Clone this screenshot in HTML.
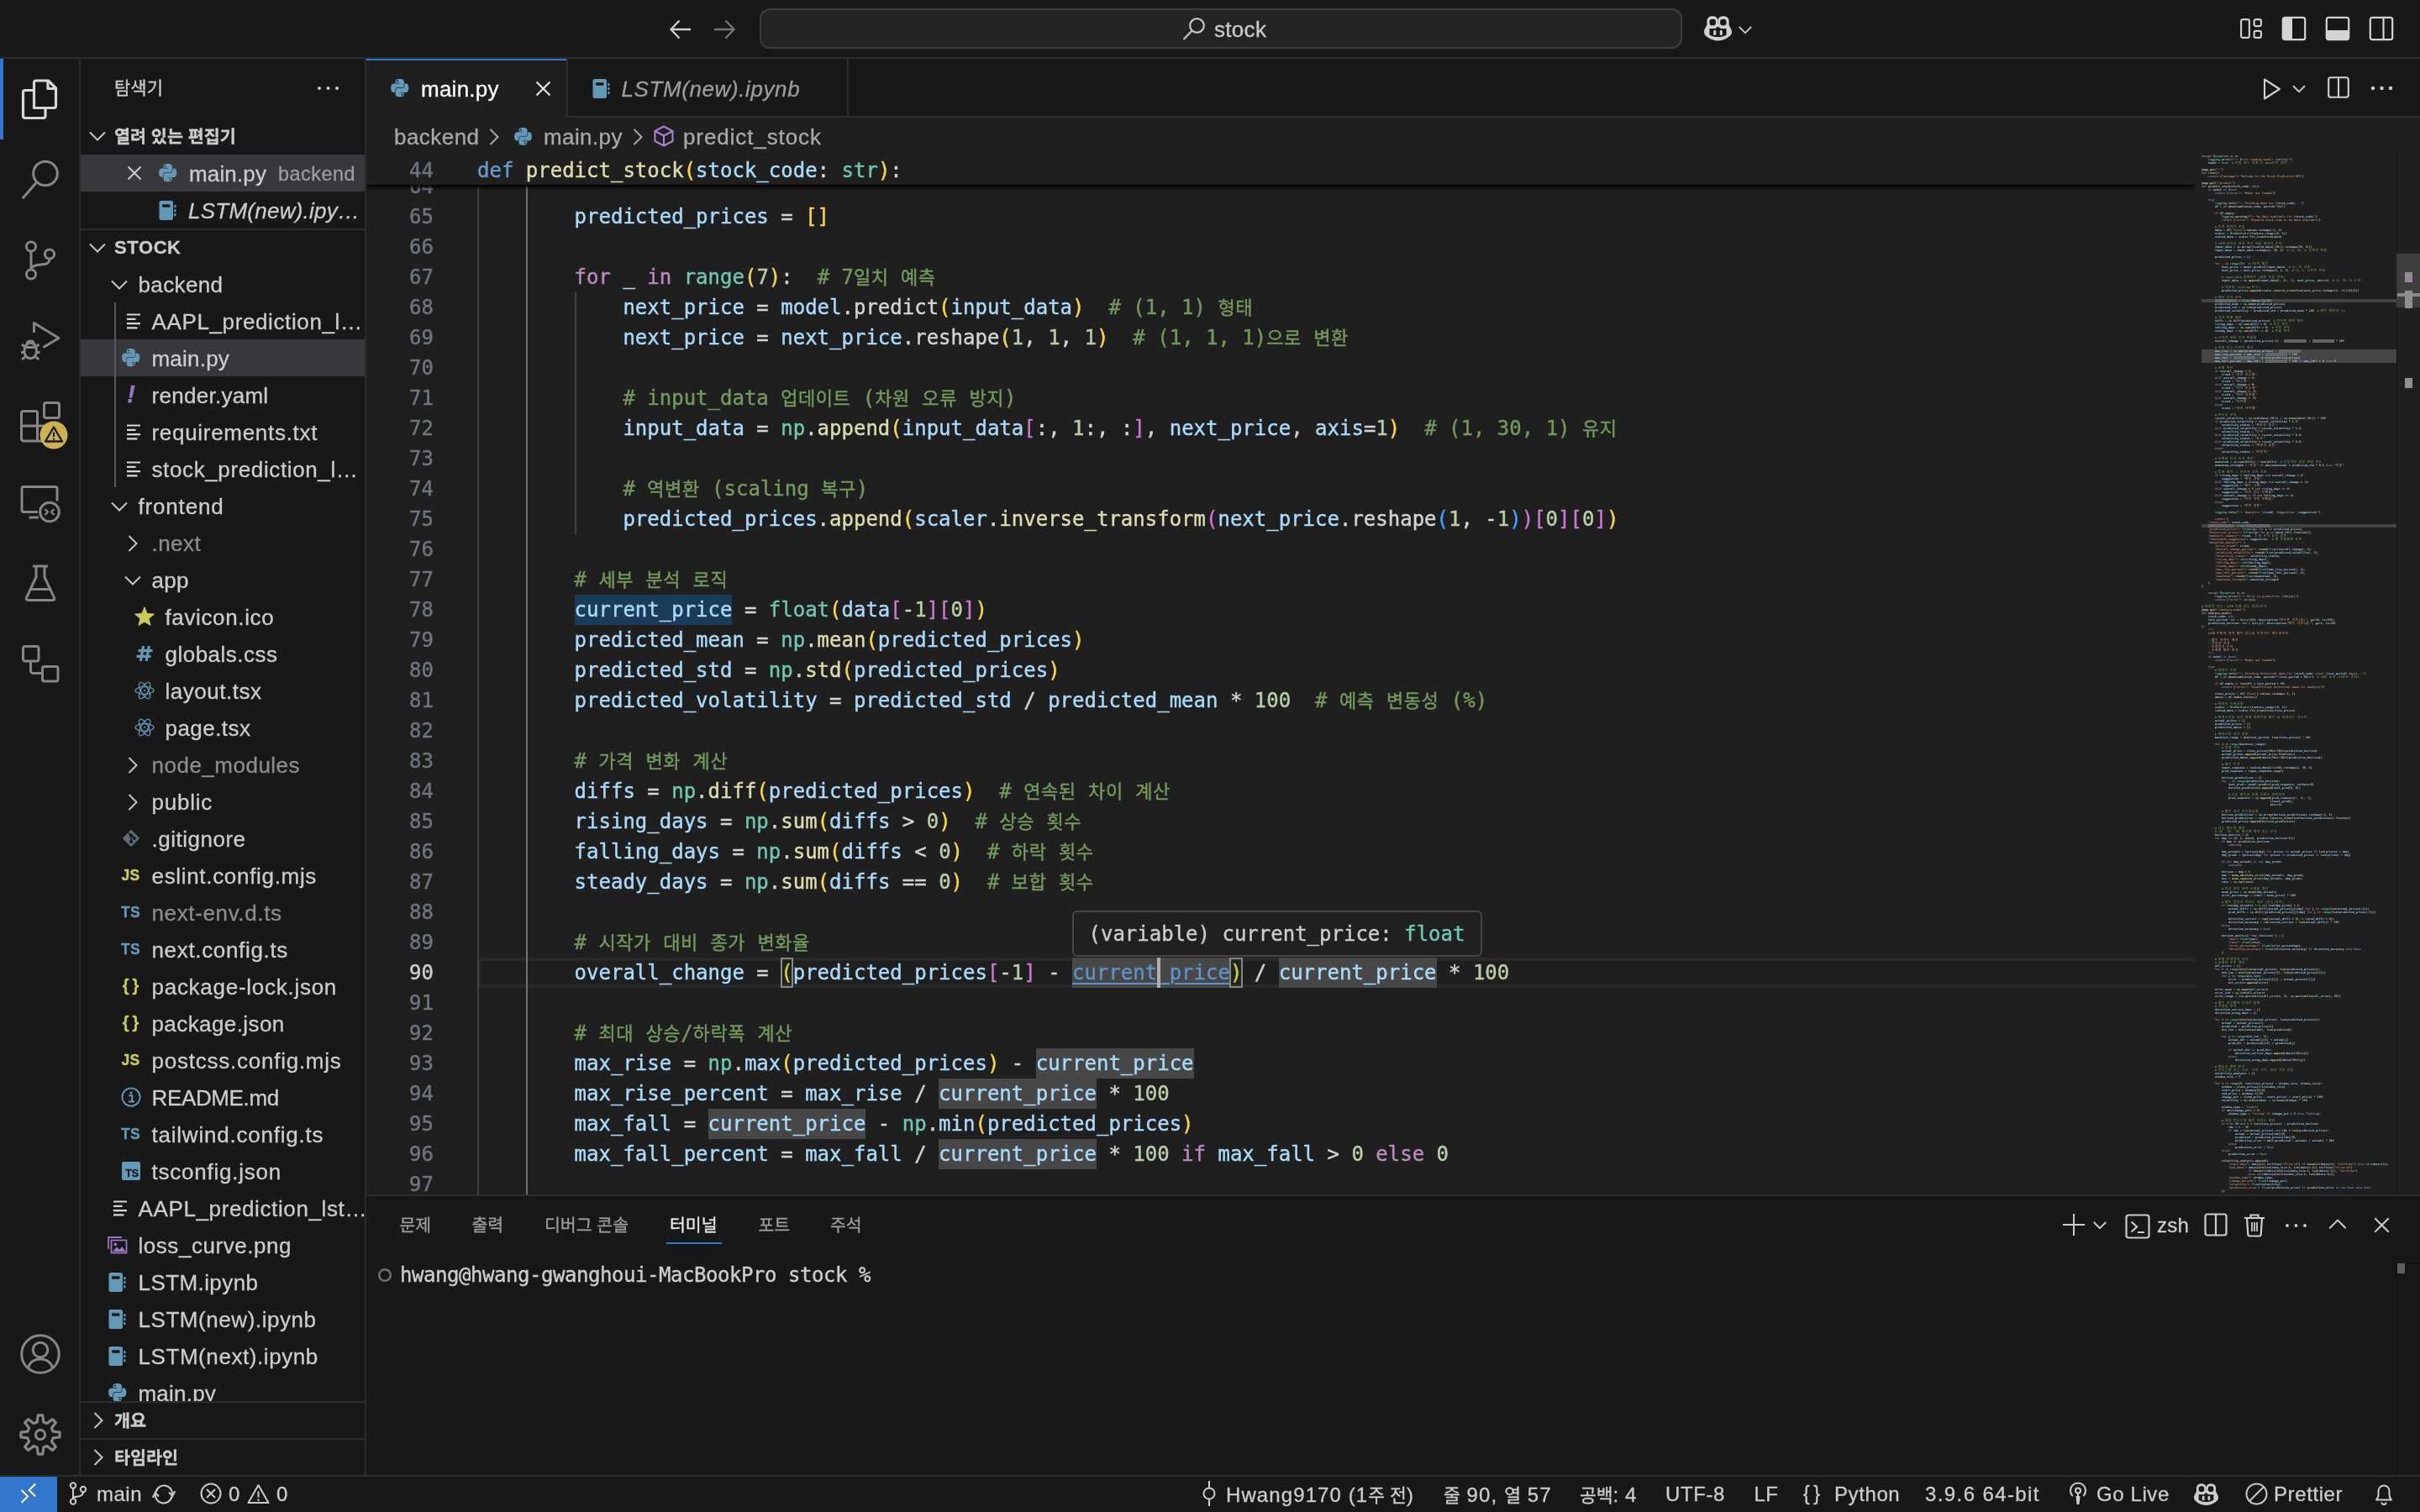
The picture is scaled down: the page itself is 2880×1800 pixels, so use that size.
<!DOCTYPE html>
<html lang="ko"><head><meta charset="utf-8"><title>main.py — stock</title>
<style>

*{box-sizing:border-box;margin:0;padding:0}
html,body{width:2880px;height:1800px;overflow:hidden;background:#181818}
body{font-family:"Liberation Sans","Noto Sans CJK KR",sans-serif;color:#cccccc;font-size:26px;-webkit-text-stroke:.3px}
#app{position:relative;width:2880px;height:1800px;overflow:hidden;background:#181818;will-change:transform}
.abs{position:absolute}
svg{display:block;overflow:visible}
.mono{-webkit-text-stroke:.4px;font-family:"DejaVu Sans Mono","Liberation Mono","Noto Sans CJK KR",monospace}
.ko{font-family:"Noto Sans CJK KR","Liberation Sans",sans-serif}
/* title */
#title{position:absolute;left:0;top:0;width:2880px;height:70px;background:#181818;border-bottom:2px solid #2b2b2b}
#cmd{position:absolute;left:904px;top:10px;width:1098px;height:48px;border-radius:12px;background:#232323;border:2px solid #3c3c3c}
/* activity */
#act{position:absolute;left:0;top:70px;width:96px;height:1686px;background:#181818;border-right:2px solid #2b2b2b}
/* sidebar */
#side{position:absolute;left:96px;top:70px;width:340px;height:1686px;background:#181818;border-right:2px solid #2b2b2b;overflow:hidden}
.row{position:absolute;left:0;width:338px;height:44px;line-height:44px;white-space:nowrap;overflow:hidden;font-size:26px;color:#cccccc}
.row .lbl{position:absolute;top:1px}
.row.sel{background:#37373c}
.dim{color:#8c8c8c}
/* editor */
#ed{position:absolute;left:436px;top:70px;width:2444px;height:1352px;background:#1f1f1f;overflow:hidden}
#tabs{position:absolute;left:0;top:0;width:2444px;height:70px;background:#181818;border-bottom:2px solid #2b2b2b}
.tab{position:absolute;top:0;height:70px;border-right:2px solid #2b2b2b;font-size:26px;line-height:70px;white-space:nowrap}
#bc{position:absolute;left:0;top:70px;width:2444px;height:44px;background:#1f1f1f;font-size:26px;line-height:44px;color:#a9a9a9;white-space:nowrap}
.cl{position:absolute;left:0;height:36px;line-height:36px;font-size:24px;white-space:pre;color:#d4d4d4}
.ln{position:absolute;left:0;width:80px;height:36px;line-height:36px;font-size:24px;text-align:right;color:#6f7680}
/* panel */
#panel{position:absolute;left:436px;top:1422px;width:2444px;height:334px;background:#181818;border-top:2px solid #2b2b2b}
/* status */
#status{position:absolute;left:0;top:1756px;width:2880px;height:44px;background:#181818;border-top:2px solid #2b2b2b;font-size:24px;line-height:42px;color:#cccccc;white-space:nowrap}
.st{position:absolute;top:0;height:42px}
/* syntax */
.k{color:#679ad1}.f{color:#dcdcaf}.v{color:#aadafa}.t{color:#71c6b1}.c{color:#bc89bd}.n{color:#bacdab}.m{color:#74985d}.s{color:#c5947c}
.b1{color:#f9d849}.b2{color:#cc76d1}.b3{color:#4a9df8}.p{color:#d4d4d4}
.hl,.hw{display:inline-block;height:36px;vertical-align:top}.hl{background:#474747}.hw{background:#1a3c58}

.kr{font-family:"Noto Sans CJK KR",sans-serif;font-size:22px;letter-spacing:.55px;line-height:0;position:relative;top:-.5px}
.lk{color:#5f92c9;text-decoration:underline;text-underline-offset:4px;text-decoration-thickness:2px}
.mmt{position:absolute;left:8px;top:0;font-size:3.320px;line-height:4px;white-space:pre;color:#d4d4d4;opacity:.9;font-weight:700}
.mk{letter-spacing:.95px}
.mmt{-webkit-text-stroke:0}
.mmt .b1,.mmt .b2,.mmt .b3{color:inherit}
.mh{background:#6a6a6a;color:transparent}

</style></head>
<body>
<div id="app">

<div id="title">
  <svg class="abs" style="left:796px;top:23px" width="28" height="24" viewBox="0 0 28 24" fill="none" stroke="#cfcfcf" stroke-width="2.3" stroke-linecap="butt" stroke-linejoin="miter"><path d="M26 12H2.5M12.5 1.5L2.5 12l10 10.5"/></svg>
  <svg class="abs" style="left:848px;top:23px" width="28" height="24" viewBox="0 0 28 24" fill="none" stroke="#767676" stroke-width="2.3" stroke-linecap="butt" stroke-linejoin="miter"><path d="M2 12h23.5M15.5 1.5L25.5 12l-10 10.5"/></svg>
  <div id="cmd"></div>
  <svg class="abs" style="left:1407px;top:20px" width="28" height="28" viewBox="0 0 28 28" fill="none" stroke="#c4c4c4" stroke-width="2.2"><circle cx="17.5" cy="10.5" r="8.3"/><path d="M11.6 16.6L1.5 27"/></svg>
  <div class="abs" style="left:1445px;top:13px;height:44px;line-height:44px;font-size:26px;color:#cccccc;letter-spacing:0.3px">stock</div>
  <!-- copilot -->
  <svg class="abs" style="left:2027.8px;top:19.1px" width="33" height="29.5" viewBox="0 0 32.800 29.400"><path fill="#d0d0d0" d="M3.400 10C3.400 12.500 0 14.500 0 19.200c0 3.300 2.500 5.100 5.200 6.700 3.300 2 7.300 3.400 11.200 3.400s7.900-1.400 11.200-3.400c2.700-1.600 5.200-3.400 5.200-6.700 0-4.700-3.400-6.700-3.400-9.200z"/>
<rect x="3.300" y=".2" width="13.300" height="14.600" rx="5.600" ry="5.800" fill="#d0d0d0"/><rect x="16.200" y=".2" width="13.300" height="14.600" rx="5.600" ry="5.800" fill="#d0d0d0"/>
<rect x="6.400" y="3.800" width="7.400" height="7.500" rx="3" ry="3.100" fill="#181818"/><rect x="19" y="3.800" width="7.400" height="7.500" rx="3" ry="3.100" fill="#181818"/>
<path fill="#181818" d="M6.400 15h20v7.300c-2.900 1.900-6.400 2.700-10 2.700s-7.100-.8-10-2.700z"/><path fill="#181818" d="M12.800 15.200l3.600-2.700 3.600 2.700z"/><path fill="#181818" d="M15.200 0l1.200 1.700L17.600 0z"/>
<rect x="11.100" y="16.800" width="3.100" height="6.200" rx="1.550" fill="#d0d0d0"/><rect x="18.600" y="16.800" width="3.100" height="6.200" rx="1.550" fill="#d0d0d0"/></svg>
  <svg class="abs" style="left:2068.500px;top:30.500px" width="16" height="10" viewBox="0 0 16 10" fill="none" stroke="#c4c4c4" stroke-width="1.800"><path d="M.8 1l7.200 7.200L15.200 1"/></svg>
  <!-- layout icons -->
  <svg class="abs" style="left:2666px;top:22px" width="26" height="24" viewBox="0 0 26 24" fill="none" stroke="#cfcfcf" stroke-width="2.100"><rect x="1.100" y="1.100" width="9.800" height="21.800" rx="2"/><rect x="16.600" y="1.100" width="8.300" height="8" rx="2"/><rect x="16.600" y="14.900" width="8.300" height="8" rx="2"/></svg>
  <svg class="abs" style="left:2715px;top:19px" width="30" height="30" viewBox="0 0 30 30"><rect x="1.800" y="1.800" width="26.400" height="26.400" rx="2.500" fill="none" stroke="#d4d4d4" stroke-width="2.200"/><path d="M2 3.500A1.500 1.500 0 013.500 2H13v26H3.500A1.500 1.500 0 012 26.500z" fill="#d4d4d4"/></svg>
  <svg class="abs" style="left:2767px;top:19px" width="30" height="30" viewBox="0 0 30 30"><rect x="1.800" y="1.800" width="26.400" height="26.400" rx="2.500" fill="none" stroke="#d4d4d4" stroke-width="2.200"/><path d="M2 17h26v9.500a1.500 1.500 0 01-1.500 1.500h-23A1.500 1.500 0 012 26.500z" fill="#d4d4d4"/></svg>
  <svg class="abs" style="left:2819px;top:19px" width="30" height="30" viewBox="0 0 30 30" fill="none" stroke="#d4d4d4" stroke-width="2.200"><rect x="1.800" y="1.800" width="26.400" height="26.400" rx="2.500"/><path d="M17.500 2v26"/></svg>
</div>

<div id="act">
<div class="abs" style="left:0;top:0;width:4px;height:96px;background:#3376cd"></div>
<svg class="abs" style="left:24px;top:24px" width="48" height="48" viewBox="0 0 48 48" fill="none" stroke="#d7d7d7" stroke-width="3.2" stroke-linejoin="round" stroke-linecap="butt"><path d="M16.500 34.500V4.500a2.500 2.500 0 012.500-2.500h14.500l9 9v21a2.500 2.500 0 01-2.500 2.500z" /><path d="M33 2v9.500h9.500" /><path d="M16.500 13.500H6a2.500 2.500 0 00-2.500 2.500v28a2.500 2.500 0 002.500 2.500h21.500a2.500 2.500 0 002.500-2.500V34.500"/></svg>
<svg class="abs" style="left:24px;top:120px" width="48" height="48" viewBox="0 0 48 48" fill="none" stroke="#868686" stroke-width="3.0" stroke-linejoin="round" stroke-linecap="butt"><circle cx="30" cy="16.500" r="14.300"/><path d="M19.800 26.700L2.800 46.200"/></svg>
<svg class="abs" style="left:24px;top:216px" width="48" height="48" viewBox="0 0 48 48" fill="none" stroke="#868686" stroke-width="3.0" stroke-linejoin="round" stroke-linecap="butt"><circle cx="13" cy="7.500" r="5.600"/><circle cx="35" cy="16.500" r="5.600"/><circle cx="13" cy="40.500" r="5.600"/><path d="M13 13.100V34.900M35 22.100c0 5.500-4 6.600-10.500 6.900-6.200.3-10.800 1.800-11.500 6"/></svg>
<svg class="abs" style="left:24px;top:312px" width="48" height="48" viewBox="0 0 48 48" fill="none" stroke="#868686" stroke-width="3.0" stroke-linejoin="round" stroke-linecap="butt"><path d="M16.500 14V2.500L46 20.500 27.500 31.500"/><ellipse cx="12.200" cy="35.500" rx="7.300" ry="9.300"/><path d="M5.200 31.500h14M1 37.500h4M19.500 37.500h4M2 28l4.200 3.200M22.400 28l-4.200 3.200M2.200 46l4-3.600M22.200 46l-4-3.600M8 27.500c0-2 1.700-3.500 4.200-3.500s4.200 1.500 4.200 3.500"/></svg>
<svg class="abs" style="left:24px;top:408px" width="48" height="48" viewBox="0 0 48 48" fill="none" stroke="#868686" stroke-width="3.0" stroke-linejoin="round" stroke-linecap="butt"><rect x="28.500" y="1.500" width="18" height="18" rx="2.500"/><path d="M20.500 11.500H4a2.500 2.500 0 00-2.500 2.500v30.500a2.500 2.500 0 002.500 2.500h30.500a2.500 2.500 0 002.500-2.500V28M20.500 11.500V47M1.500 29h35.500"/></svg>
<svg class="abs" style="left:47px;top:431px" width="34" height="34" viewBox="0 0 34 34"><circle cx="17" cy="17" r="16.500" fill="#ceb252"/><path d="M17 7.500L27 24.500H7z" fill="none" stroke="#181818" stroke-width="2.300" stroke-linejoin="round"/><path d="M17 13.500v5.500M17 20.700v2" stroke="#181818" stroke-width="2.200"/></svg>
<svg class="abs" style="left:24px;top:506px" width="48" height="48" viewBox="0 0 48 48" fill="none" stroke="#868686" stroke-width="3.0" stroke-linejoin="round" stroke-linecap="butt"><path d="M21 33.500H4.500A2.500 2.500 0 012 31V6a2.500 2.500 0 012.500-2.500h37A2.500 2.500 0 0144 6v14.500"/><path d="M10.500 40H22"/><circle cx="35" cy="33.500" r="11.300"/><path d="M29.500 30l3.500 3.500-3.500 3.500M40.500 30L37 33.500l3.500 3.500" stroke-width="2.300"/></svg>
<svg class="abs" style="left:24px;top:600px" width="48" height="48" viewBox="0 0 48 48" fill="none" stroke="#868686" stroke-width="3.0" stroke-linejoin="round" stroke-linecap="butt"><path d="M15 4h18M19 4v13L7.500 41.500c-.8 1.800.2 3 2 3h29c1.800 0 2.800-1.200 2-3L29 17V4M12.500 31.500h23"/></svg>
<svg class="abs" style="left:24px;top:697px" width="48" height="48" viewBox="0 0 48 48" fill="none" stroke="#868686" stroke-width="3.0" stroke-linejoin="round" stroke-linecap="butt"><rect x="3.500" y="2.500" width="18.500" height="17.500" rx="2.500"/><rect x="26.500" y="26.500" width="18.500" height="17.500" rx="2.500"/><path d="M12.500 20v11.500a3 3 0 003 3h11"/></svg>
<svg class="abs" style="left:24px;top:1518px" width="48" height="48" viewBox="0 0 48 48" fill="none" stroke="#868686" stroke-width="3.0" stroke-linejoin="round" stroke-linecap="butt"><circle cx="24" cy="24" r="22.300"/><circle cx="24" cy="19" r="8.800"/><path d="M9.500 40.500c2-7 7.500-10.500 14.500-10.500s12.500 3.500 14.500 10.500"/></svg>
<svg class="abs" style="left:24px;top:1614px" width="48" height="48" viewBox="0 0 48 48" fill="none" stroke="#868686" stroke-width="3.2" stroke-linejoin="round" stroke-linecap="butt"><path d="M20.2 8.9 L21.2 0.9 L26.8 0.9 L27.8 8.9 L32.0 10.6 L38.4 5.6 L42.4 9.6 L37.4 16.0 L39.1 20.2 L47.1 21.2 L47.1 26.8 L39.1 27.8 L37.4 32.0 L42.4 38.4 L38.4 42.4 L32.0 37.4 L27.8 39.1 L26.8 47.1 L21.2 47.1 L20.2 39.1 L16.0 37.4 L9.6 42.4 L5.6 38.4 L10.6 32.0 L8.9 27.8 L0.9 26.8 L0.9 21.2 L8.9 20.2 L10.6 16.0 L5.6 9.6 L9.6 5.6 L16.0 10.6Z"/><circle cx="24" cy="24" r="5.600"/></svg>
</div>
<div id="side">
<div class="abs ko" style="left:40px;top:0;height:70px;line-height:66px;font-size:21px;color:#cccccc">탐색기</div>
<svg class="abs" style="left:281px;top:32px" width="27" height="6" viewBox="0 0 27 6" fill="#cccccc"><circle cx="3" cy="3" r="2"/><circle cx="13.500" cy="3" r="2"/><circle cx="24" cy="3" r="2"/></svg>
<div class="row" style="top:70px"><svg class="abs" style="left:10.0px;top:16.0px" width="20" height="12" viewBox="0 0 20 12" ><path d="M1 1.500l9 9 9-9" fill="none" stroke="#c5c5c5" stroke-width="2"/></svg><span class="lbl ko" style="left:40px;top:-1.500px;font-size:20.700px;font-weight:700;color:#cccccc">열려 있는 편집기</span></div>
<div class="row sel" style="top:114px"><svg class="abs" style="left:55.0px;top:13.0px" width="18" height="18" viewBox="0 0 18 18" ><path d="M1.500 1.500l15 15M16.500 1.500l-15 15" stroke="#cccccc" stroke-width="2" fill="none"/></svg><svg class="abs" style="left:92.8px;top:11.2px" width="21.5" height="21.5" viewBox="0 0 111.200 112.400" ><g fill="#6398b7"><path d="M54.900 0C50.300 0 46 .4 42.100 1.100 30.800 3.100 28.700 7.300 28.700 15v10.200h26.800v3.400H18.600c-7.800 0-14.600 4.700-16.700 13.600-2.500 10.200-2.600 16.600 0 27.300 1.900 7.900 6.400 13.600 14.200 13.600h9.200V70.800c0-8.800 7.700-16.600 16.800-16.600h26.800c7.400 0 13.400-6.100 13.400-13.600V15c0-7.300-6.100-12.700-13.400-13.900C64.300.300 59.500 0 54.900 0zM40.400 8.200c2.800 0 5 2.300 5 5.100s-2.200 5.100-5 5.100-5-2.300-5-5.100 2.200-5.100 5-5.100z"/><path d="M85.600 28.700v11.900c0 9.200-7.800 17-16.700 17H42.100c-7.300 0-13.400 6.300-13.400 13.600v25.500c0 7.300 6.300 11.500 13.400 13.600 8.500 2.500 16.600 2.900 26.800 0 6.700-2 13.400-5.900 13.400-13.600V86.500H55.500v-3.400h40.200c7.800 0 10.700-5.400 13.400-13.600 2.800-8.400 2.700-16.500 0-27.200-1.900-7.800-5.600-13.600-13.400-13.600zM70.600 93.300c2.800 0 5 2.300 5 5.100s-2.200 5.100-5 5.100-5-2.300-5-5.100 2.200-5.100 5-5.100z"/></g></svg><span class="lbl " style="left:129px;letter-spacing:0.15px;">main.py</span><span class="lbl" style="left:235px;font-size:23.400px;color:#9d9d9d;letter-spacing:.5px">backend</span></div>
<div class="row" style="top:158px"><svg class="abs" style="left:93.0px;top:10.5px" width="21" height="23" viewBox="0 0 21 23" ><g fill="#6398b7"><path d="M3 0h11.500A2.500 2.500 0 0117 2.500v18a2.500 2.500 0 01-2.500 2.500H3A2.500 2.500 0 01.5 20.500v-18A2.500 2.500 0 013 0z"/><rect x="18.200" y="5" width="2.300" height="3.200" rx=".8"/><rect x="18.200" y="10" width="2.300" height="3.200" rx=".8"/><rect x="18.200" y="15" width="2.300" height="3.200" rx=".8"/></g><rect x="4" y="4.200" width="9.500" height="3.600" rx=".8" fill="#181818"/></svg><span class="lbl " style="left:128px;letter-spacing:0.25px;font-style:italic">LSTM(new).ipy…</span></div>
<div class="abs" style="left:0;top:202px;width:338px;height:2px;background:#2b2b2b"></div>
<div class="row" style="top:202px"><svg class="abs" style="left:10.0px;top:17.0px" width="20" height="12" viewBox="0 0 20 12" ><path d="M1 1.500l9 9 9-9" fill="none" stroke="#c5c5c5" stroke-width="2"/></svg><span class="lbl" style="left:40px;top:1px;font-size:22px;font-weight:700;color:#cccccc;letter-spacing:.6px">STOCK</span></div>
<div class="row" style="top:246px"><svg class="abs" style="left:35.5px;top:17.0px" width="20" height="12" viewBox="0 0 20 12" ><path d="M1 1.500l9 9 9-9" fill="none" stroke="#c5c5c5" stroke-width="2"/></svg><span class="lbl " style="left:68.5px;letter-spacing:0.38px;">backend</span></div>
<div class="row" style="top:290px"><svg class="abs" style="left:55.0px;top:11.5px" width="16" height="21" viewBox="0 0 16 21" ><g stroke="#d5d7d6" stroke-width="2.200"><path d="M0 2.500h16M0 7.800h10.500M0 13.100h16M0 18.400h12.500"/></g></svg><span class="lbl " style="left:84.5px;letter-spacing:0.62px;">AAPL_prediction_l…</span></div>
<div class="row sel" style="top:334px"><svg class="abs" style="left:48.8px;top:11.2px" width="21.5" height="21.5" viewBox="0 0 111.200 112.400" ><g fill="#6398b7"><path d="M54.900 0C50.300 0 46 .4 42.100 1.100 30.800 3.100 28.700 7.300 28.700 15v10.200h26.800v3.400H18.600c-7.800 0-14.600 4.700-16.700 13.600-2.500 10.200-2.600 16.600 0 27.300 1.900 7.900 6.400 13.600 14.200 13.600h9.200V70.800c0-8.800 7.700-16.600 16.800-16.600h26.800c7.400 0 13.400-6.100 13.400-13.600V15c0-7.300-6.100-12.700-13.400-13.900C64.300.300 59.500 0 54.900 0zM40.400 8.200c2.800 0 5 2.300 5 5.100s-2.200 5.100-5 5.100-5-2.300-5-5.100 2.200-5.100 5-5.100z"/><path d="M85.600 28.700v11.900c0 9.200-7.800 17-16.700 17H42.100c-7.300 0-13.400 6.300-13.400 13.600v25.500c0 7.300 6.300 11.500 13.400 13.600 8.500 2.500 16.600 2.900 26.800 0 6.700-2 13.400-5.900 13.400-13.600V86.500H55.500v-3.400h40.200c7.800 0 10.700-5.400 13.400-13.600 2.800-8.400 2.700-16.500 0-27.200-1.900-7.800-5.600-13.600-13.400-13.600zM70.600 93.300c2.800 0 5 2.300 5 5.100s-2.200 5.100-5 5.100-5-2.300-5-5.100 2.200-5.100 5-5.100z"/></g></svg><span class="lbl " style="left:84.5px;letter-spacing:0.21px;">main.py</span></div>
<div class="row" style="top:378px"><div class="abs" style="left:30.0px;top:-1px;width:60px;height:44px;line-height:44px;text-align:center;font-family:'Liberation Sans',sans-serif;font-size:30px;font-weight:700;font-style:italic;color:#9976bf;letter-spacing:0px">!</div><span class="lbl " style="left:84.5px;letter-spacing:0.28px;">render.yaml</span></div>
<div class="row" style="top:422px"><svg class="abs" style="left:55.0px;top:11.5px" width="16" height="21" viewBox="0 0 16 21" ><g stroke="#d5d7d6" stroke-width="2.200"><path d="M0 2.500h16M0 7.800h10.500M0 13.100h16M0 18.400h12.500"/></g></svg><span class="lbl " style="left:84.5px;letter-spacing:0.7px;">requirements.txt</span></div>
<div class="row" style="top:466px"><svg class="abs" style="left:55.0px;top:11.5px" width="16" height="21" viewBox="0 0 16 21" ><g stroke="#d5d7d6" stroke-width="2.200"><path d="M0 2.500h16M0 7.800h10.500M0 13.100h16M0 18.400h12.500"/></g></svg><span class="lbl " style="left:84.5px;letter-spacing:0.62px;">stock_prediction_l…</span></div>
<div class="row" style="top:510px"><svg class="abs" style="left:35.5px;top:17.0px" width="20" height="12" viewBox="0 0 20 12" ><path d="M1 1.500l9 9 9-9" fill="none" stroke="#c5c5c5" stroke-width="2"/></svg><span class="lbl " style="left:68.5px;letter-spacing:0.82px;">frontend</span></div>
<div class="row" style="top:554px"><svg class="abs" style="left:56.0px;top:12.5px" width="12" height="20" viewBox="0 0 12 20" ><path d="M1.500 1l9 9-9 9" fill="none" stroke="#c5c5c5" stroke-width="2"/></svg><span class="lbl dim" style="left:84.5px;letter-spacing:0.47px;">.next</span></div>
<div class="row" style="top:598px"><svg class="abs" style="left:51.5px;top:17.0px" width="20" height="12" viewBox="0 0 20 12" ><path d="M1 1.500l9 9 9-9" fill="none" stroke="#c5c5c5" stroke-width="2"/></svg><span class="lbl " style="left:84.5px;letter-spacing:0.34px;">app</span></div>
<div class="row" style="top:642px"><svg class="abs" style="left:64.0px;top:10.0px" width="24" height="24" viewBox="0 0 24 24" ><polygon points="12.00,0.80 15.06,8.59 23.41,9.09 16.95,14.41 19.05,22.51 12.00,18.00 4.95,22.51 7.05,14.41 0.59,9.09 8.94,8.59" fill="#cbcb5a" stroke="#cbcb5a" stroke-width="1" stroke-linejoin="round"/></svg><span class="lbl " style="left:100.5px;letter-spacing:0.63px;">favicon.ico</span></div>
<div class="row" style="top:686px"><svg class="abs" style="left:66.0px;top:12.5px" width="20" height="18" viewBox="0 0 20 18" ><g stroke="#6398b7" stroke-width="3.200" fill="none"><path d="M2.500 5.700h17M.5 12.300h17M8.600 0L5.400 18M15.400 0l-3.200 18"/></g></svg><span class="lbl " style="left:100.5px;letter-spacing:0.49px;">globals.css</span></div>
<div class="row" style="top:730px"><svg class="abs" style="left:64.0px;top:10.0px" width="24" height="24" viewBox="0 0 24 24" ><g fill="none" stroke="#6398b7" stroke-width="1.250"><ellipse cx="12" cy="12" rx="11" ry="4.300"/><ellipse cx="12" cy="12" rx="11" ry="4.300" transform="rotate(60 12 12)"/><ellipse cx="12" cy="12" rx="11" ry="4.300" transform="rotate(120 12 12)"/></g><circle cx="12" cy="12" r="1.100" fill="#6398b7"/></svg><span class="lbl " style="left:100.5px;letter-spacing:0.52px;">layout.tsx</span></div>
<div class="row" style="top:774px"><svg class="abs" style="left:64.0px;top:10.0px" width="24" height="24" viewBox="0 0 24 24" ><g fill="none" stroke="#6398b7" stroke-width="1.250"><ellipse cx="12" cy="12" rx="11" ry="4.300"/><ellipse cx="12" cy="12" rx="11" ry="4.300" transform="rotate(60 12 12)"/><ellipse cx="12" cy="12" rx="11" ry="4.300" transform="rotate(120 12 12)"/></g><circle cx="12" cy="12" r="1.100" fill="#6398b7"/></svg><span class="lbl " style="left:100.5px;letter-spacing:0.46px;">page.tsx</span></div>
<div class="row" style="top:818px"><svg class="abs" style="left:56.0px;top:12.5px" width="12" height="20" viewBox="0 0 12 20" ><path d="M1.500 1l9 9-9 9" fill="none" stroke="#c5c5c5" stroke-width="2"/></svg><span class="lbl dim" style="left:84.5px;letter-spacing:0.5px;">node_modules</span></div>
<div class="row" style="top:862px"><svg class="abs" style="left:56.0px;top:12.5px" width="12" height="20" viewBox="0 0 12 20" ><path d="M1.500 1l9 9-9 9" fill="none" stroke="#c5c5c5" stroke-width="2"/></svg><span class="lbl " style="left:84.5px;letter-spacing:0.78px;">public</span></div>
<div class="row" style="top:906px"><svg class="abs" style="left:49.5px;top:12.0px" width="20" height="20" viewBox="0 0 20 20" ><g><path d="M10 .8L19.200 10 10 19.200.8 10z" fill="#5e6c76" stroke="#5e6c76" stroke-width="1.500" stroke-linejoin="round"/><g stroke="#181818" stroke-width="1.500" fill="#181818"><circle cx="10" cy="6.500" r="1.300"/><circle cx="10" cy="14" r="1.300"/><circle cx="13.800" cy="10" r="1.300"/><path d="M10 6.500V14M10 6.500l3.800 3.500M7 3.600l3 2.900" fill="none"/></g></g></svg><span class="lbl " style="left:84.5px;letter-spacing:0.51px;">.gitignore</span></div>
<div class="row" style="top:950px"><div class="abs" style="left:29.5px;top:0px;width:60px;height:44px;line-height:44px;text-align:center;font-family:'Liberation Sans',sans-serif;font-size:17.5px;font-weight:700;font-style:normal;color:#cbcb5a;letter-spacing:0.3px">JS</div><span class="lbl " style="left:84.5px;letter-spacing:0.68px;">eslint.config.mjs</span></div>
<div class="row" style="top:994px"><div class="abs" style="left:29.5px;top:0px;width:60px;height:44px;line-height:44px;text-align:center;font-family:'Liberation Sans',sans-serif;font-size:17.5px;font-weight:700;font-style:normal;color:#6398b7;letter-spacing:0.3px">TS</div><span class="lbl dim" style="left:84.5px;letter-spacing:0.63px;">next-env.d.ts</span></div>
<div class="row" style="top:1038px"><div class="abs" style="left:29.5px;top:0px;width:60px;height:44px;line-height:44px;text-align:center;font-family:'Liberation Sans',sans-serif;font-size:17.5px;font-weight:700;font-style:normal;color:#6398b7;letter-spacing:0.3px">TS</div><span class="lbl " style="left:84.5px;letter-spacing:0.66px;">next.config.ts</span></div>
<div class="row" style="top:1082px"><div class="abs" style="left:29.5px;top:-1px;width:60px;height:44px;line-height:44px;text-align:center;font-family:'Liberation Sans',sans-serif;font-size:20px;font-weight:700;font-style:normal;color:#cbcb5a;letter-spacing:0px">{&thinsp;}</div><span class="lbl " style="left:84.5px;letter-spacing:0.73px;">package-lock.json</span></div>
<div class="row" style="top:1126px"><div class="abs" style="left:29.5px;top:-1px;width:60px;height:44px;line-height:44px;text-align:center;font-family:'Liberation Sans',sans-serif;font-size:20px;font-weight:700;font-style:normal;color:#cbcb5a;letter-spacing:0px">{&thinsp;}</div><span class="lbl " style="left:84.5px;letter-spacing:0.41px;">package.json</span></div>
<div class="row" style="top:1170px"><div class="abs" style="left:29.5px;top:0px;width:60px;height:44px;line-height:44px;text-align:center;font-family:'Liberation Sans',sans-serif;font-size:17.5px;font-weight:700;font-style:normal;color:#cbcb5a;letter-spacing:0.3px">JS</div><span class="lbl " style="left:84.5px;letter-spacing:0.76px;">postcss.config.mjs</span></div>
<div class="row" style="top:1214px"><svg class="abs" style="left:47.5px;top:10.0px" width="24" height="24" viewBox="0 0 24 24" ><circle cx="12" cy="12" r="10.600" fill="none" stroke="#6398b7" stroke-width="1.800"/><circle cx="12" cy="7" r="1.600" fill="#6398b7"/><path d="M9.300 10.300h3.900v7M9 17.600h7" stroke="#6398b7" stroke-width="2" fill="none"/></svg><span class="lbl " style="left:84.5px;letter-spacing:-0.36px;">README.md</span></div>
<div class="row" style="top:1258px"><div class="abs" style="left:29.5px;top:0px;width:60px;height:44px;line-height:44px;text-align:center;font-family:'Liberation Sans',sans-serif;font-size:17.5px;font-weight:700;font-style:normal;color:#6398b7;letter-spacing:0.3px">TS</div><span class="lbl " style="left:84.5px;letter-spacing:0.78px;">tailwind.config.ts</span></div>
<div class="row" style="top:1302px"><div class="abs" style="left:48.5px;top:11px;width:22px;height:22px;background:#6398b7;border-radius:2px"></div><div class="abs" style="left:48.5px;top:18px;width:22px;height:15px;line-height:15px;text-align:center;font-size:12.500px;font-weight:700;color:#181818;letter-spacing:-.3px;padding-left:3px">TS</div><span class="lbl " style="left:84.5px;letter-spacing:0.77px;">tsconfig.json</span></div>
<div class="row" style="top:1346px"><svg class="abs" style="left:39.0px;top:11.5px" width="16" height="21" viewBox="0 0 16 21" ><g stroke="#d5d7d6" stroke-width="2.200"><path d="M0 2.500h16M0 7.800h10.500M0 13.100h16M0 18.400h12.500"/></g></svg><span class="lbl " style="left:68.5px;letter-spacing:0.62px;">AAPL_prediction_lst…</span></div>
<div class="row" style="top:1390px"><svg class="abs" style="left:31.5px;top:11.5px" width="24" height="21" viewBox="0 0 24 21" ><g fill="none" stroke="#9976bf" stroke-width="1.800"><path d="M1 15V1h16"/><rect x="4.500" y="4.500" width="18" height="15" /></g><circle cx="9.300" cy="9.300" r="1.900" fill="#9976bf"/><path d="M6 18l5-5.500 3.200 3 3-3.500 4.300 6z" fill="#9976bf"/></svg><span class="lbl " style="left:68.5px;letter-spacing:0.54px;">loss_curve.png</span></div>
<div class="row" style="top:1434px"><svg class="abs" style="left:33.0px;top:10.5px" width="21" height="23" viewBox="0 0 21 23" ><g fill="#6398b7"><path d="M3 0h11.500A2.500 2.500 0 0117 2.500v18a2.500 2.500 0 01-2.500 2.500H3A2.500 2.500 0 01.5 20.500v-18A2.500 2.500 0 013 0z"/><rect x="18.200" y="5" width="2.300" height="3.200" rx=".8"/><rect x="18.200" y="10" width="2.300" height="3.200" rx=".8"/><rect x="18.200" y="15" width="2.300" height="3.200" rx=".8"/></g><rect x="4" y="4.200" width="9.500" height="3.600" rx=".8" fill="#181818"/></svg><span class="lbl " style="left:68.5px;letter-spacing:0.42px;">LSTM.ipynb</span></div>
<div class="row" style="top:1478px"><svg class="abs" style="left:33.0px;top:10.5px" width="21" height="23" viewBox="0 0 21 23" ><g fill="#6398b7"><path d="M3 0h11.500A2.500 2.500 0 0117 2.500v18a2.500 2.500 0 01-2.500 2.500H3A2.500 2.500 0 01.5 20.500v-18A2.500 2.500 0 013 0z"/><rect x="18.200" y="5" width="2.300" height="3.200" rx=".8"/><rect x="18.200" y="10" width="2.300" height="3.200" rx=".8"/><rect x="18.200" y="15" width="2.300" height="3.200" rx=".8"/></g><rect x="4" y="4.200" width="9.500" height="3.600" rx=".8" fill="#181818"/></svg><span class="lbl " style="left:68.5px;letter-spacing:0.56px;">LSTM(new).ipynb</span></div>
<div class="row" style="top:1522px"><svg class="abs" style="left:33.0px;top:10.5px" width="21" height="23" viewBox="0 0 21 23" ><g fill="#6398b7"><path d="M3 0h11.500A2.500 2.500 0 0117 2.500v18a2.500 2.500 0 01-2.500 2.500H3A2.500 2.500 0 01.5 20.500v-18A2.500 2.500 0 013 0z"/><rect x="18.200" y="5" width="2.300" height="3.200" rx=".8"/><rect x="18.200" y="10" width="2.300" height="3.200" rx=".8"/><rect x="18.200" y="15" width="2.300" height="3.200" rx=".8"/></g><rect x="4" y="4.200" width="9.500" height="3.600" rx=".8" fill="#181818"/></svg><span class="lbl " style="left:68.5px;letter-spacing:0.57px;">LSTM(next).ipynb</span></div>
<div class="row" style="top:1566px"><svg class="abs" style="left:32.8px;top:11.2px" width="21.5" height="21.5" viewBox="0 0 111.200 112.400" ><g fill="#6398b7"><path d="M54.900 0C50.300 0 46 .4 42.100 1.100 30.800 3.100 28.700 7.300 28.700 15v10.200h26.800v3.400H18.600c-7.800 0-14.600 4.700-16.700 13.600-2.500 10.200-2.600 16.600 0 27.300 1.900 7.900 6.400 13.600 14.200 13.600h9.200V70.800c0-8.800 7.700-16.600 16.800-16.600h26.800c7.400 0 13.400-6.100 13.400-13.600V15c0-7.300-6.100-12.700-13.400-13.900C64.300.300 59.500 0 54.900 0zM40.400 8.200c2.800 0 5 2.300 5 5.100s-2.200 5.100-5 5.100-5-2.300-5-5.100 2.200-5.100 5-5.100z"/><path d="M85.600 28.700v11.900c0 9.200-7.800 17-16.700 17H42.100c-7.300 0-13.400 6.300-13.400 13.600v25.500c0 7.300 6.300 11.500 13.400 13.600 8.500 2.500 16.600 2.900 26.800 0 6.700-2 13.400-5.900 13.400-13.600V86.500H55.500v-3.400h40.200c7.800 0 10.700-5.400 13.400-13.600 2.800-8.400 2.700-16.500 0-27.200-1.900-7.800-5.600-13.600-13.400-13.600zM70.600 93.300c2.800 0 5 2.300 5 5.100s-2.200 5.100-5 5.100-5-2.300-5-5.100 2.200-5.100 5-5.100z"/></g></svg><span class="lbl " style="left:68.5px;letter-spacing:0.21px;">main.py</span></div>
<div class="abs" style="left:40px;top:290px;width:2px;height:220px;background:#585858"></div>
<div class="abs" style="left:0;top:1598px;width:338px;height:88px;background:#181818"></div>
<div class="abs" style="left:0;top:1598px;width:338px;height:2px;background:#2b2b2b"></div>
<div class="row" style="top:1599px"><svg class="abs" style="left:15.0px;top:12.0px" width="12" height="20" viewBox="0 0 12 20" ><path d="M1.500 1l9 9-9 9" fill="none" stroke="#c5c5c5" stroke-width="2"/></svg><span class="lbl ko" style="left:40px;top:-1.500px;font-size:20.700px;font-weight:700;color:#cccccc">개요</span></div>
<div class="abs" style="left:0;top:1642px;width:338px;height:2px;background:#2b2b2b"></div>
<div class="row" style="top:1643px"><svg class="abs" style="left:15.0px;top:12.0px" width="12" height="20" viewBox="0 0 12 20" ><path d="M1.500 1l9 9-9 9" fill="none" stroke="#c5c5c5" stroke-width="2"/></svg><span class="lbl ko" style="left:40px;top:-1.500px;font-size:20.700px;font-weight:700;color:#cccccc">타임라인</span></div>
</div>
<div id="ed">
<div id="tabs">
<div class="tab" style="left:0;width:240px;background:#1f1f1f;height:72px;color:#ffffff"><div class="abs" style="left:0;top:0;width:238px;height:2px;background:#3376cd"></div><svg class="abs" style="left:28.8px;top:24.2px" width="21.5" height="21.5" viewBox="0 0 111.200 112.400" ><g fill="#6398b7"><path d="M54.900 0C50.300 0 46 .4 42.100 1.100 30.800 3.100 28.700 7.300 28.700 15v10.200h26.800v3.400H18.600c-7.800 0-14.600 4.700-16.700 13.600-2.500 10.200-2.600 16.600 0 27.300 1.900 7.900 6.400 13.600 14.200 13.600h9.200V70.800c0-8.800 7.700-16.600 16.800-16.600h26.800c7.400 0 13.400-6.100 13.400-13.600V15c0-7.300-6.100-12.700-13.400-13.900C64.300.300 59.500 0 54.900 0zM40.400 8.200c2.800 0 5 2.300 5 5.100s-2.200 5.100-5 5.100-5-2.300-5-5.100 2.200-5.100 5-5.100z"/><path d="M85.600 28.700v11.900c0 9.200-7.800 17-16.700 17H42.100c-7.300 0-13.400 6.300-13.400 13.600v25.500c0 7.300 6.300 11.500 13.400 13.600 8.500 2.500 16.600 2.900 26.800 0 6.700-2 13.400-5.900 13.400-13.600V86.500H55.500v-3.400h40.200c7.800 0 10.700-5.400 13.400-13.600 2.800-8.400 2.700-16.500 0-27.200-1.900-7.800-5.600-13.600-13.400-13.600zM70.600 93.300c2.800 0 5 2.300 5 5.100s-2.200 5.100-5 5.100-5-2.300-5-5.100 2.200-5.100 5-5.100z"/></g></svg><span class="abs" style="left:65px;top:1px;letter-spacing:.25px">main.py</span><svg class="abs" style="left:200.5px;top:25.5px" width="19" height="19" viewBox="0 0 19 19" ><path d="M1.500 1.500l16 16M17.500 1.500l-16 16" stroke="#e8e8e8" stroke-width="2.100" fill="none"/></svg></div>
<div class="tab" style="left:240px;width:334px;color:#9d9d9d"><svg class="abs" style="left:28.5px;top:23.5px" width="21" height="23" viewBox="0 0 21 23" ><g fill="#6398b7"><path d="M3 0h11.500A2.500 2.500 0 0117 2.500v18a2.500 2.500 0 01-2.500 2.500H3A2.500 2.500 0 01.5 20.500v-18A2.500 2.500 0 013 0z"/><rect x="18.200" y="5" width="2.300" height="3.200" rx=".8"/><rect x="18.200" y="10" width="2.300" height="3.200" rx=".8"/><rect x="18.200" y="15" width="2.300" height="3.200" rx=".8"/></g><rect x="4" y="4.200" width="9.500" height="3.600" rx=".8" fill="#181818"/></svg><span class="abs" style="left:63.500px;top:1px;font-style:italic;letter-spacing:.6px">LSTM(new).ipynb</span></div>
<svg class="abs" style="left:2257.0px;top:22.0px" width="22" height="28" viewBox="0 0 22 28" ><path d="M2 2.500L19.800 14 2 25.500z" fill="none" stroke="#d0d0d0" stroke-width="2.100" stroke-linejoin="round"/></svg>
<svg class="abs" style="left:2292.0px;top:30.5px" width="16" height="10" viewBox="0 0 16 10" ><path d="M1 1.200l7 7 7-7" fill="none" stroke="#c4c4c4" stroke-width="2"/></svg>
<svg class="abs" style="left:2334.0px;top:21.0px" width="26" height="26" viewBox="0 0 26 26" ><rect x="1.200" y="1.200" width="23.600" height="23.600" rx="2.500" fill="none" stroke="#d0d0d0" stroke-width="2.100"/><path d="M13 1.200v23.600" stroke="#d0d0d0" stroke-width="2.100"/></svg>
<svg class="abs" style="left:2384.5px;top:32.0px" width="27" height="6" viewBox="0 0 27 6" ><g fill="#d0d0d0"><circle cx="3" cy="3" r="2.200"/><circle cx="13.500" cy="3" r="2.200"/><circle cx="24" cy="3" r="2.200"/></g></svg>
</div>
<div id="bc">
<span class="abs" style="left:33px;top:1px;letter-spacing:.45px">backend</span>
<svg class="abs" style="left:146.0px;top:13.0px" width="12" height="20" viewBox="0 0 12 20" ><path d="M1.500 1l9 9-9 9" fill="none" stroke="#a9a9a9" stroke-width="2"/></svg>
<svg class="abs" style="left:176.0px;top:11.5px" width="21" height="21" viewBox="0 0 111.200 112.400" ><g fill="#6398b7"><path d="M54.900 0C50.300 0 46 .4 42.100 1.100 30.800 3.100 28.700 7.300 28.700 15v10.200h26.800v3.400H18.600c-7.800 0-14.600 4.700-16.700 13.600-2.500 10.200-2.600 16.600 0 27.300 1.900 7.900 6.400 13.600 14.200 13.600h9.200V70.800c0-8.800 7.700-16.600 16.800-16.600h26.800c7.400 0 13.400-6.100 13.400-13.600V15c0-7.300-6.100-12.700-13.400-13.900C64.300.300 59.500 0 54.900 0zM40.400 8.200c2.800 0 5 2.300 5 5.100s-2.200 5.100-5 5.100-5-2.300-5-5.100 2.200-5.100 5-5.100z"/><path d="M85.600 28.700v11.900c0 9.200-7.800 17-16.700 17H42.100c-7.300 0-13.400 6.300-13.400 13.600v25.500c0 7.300 6.300 11.500 13.400 13.600 8.500 2.500 16.600 2.900 26.800 0 6.700-2 13.400-5.900 13.400-13.600V86.500H55.500v-3.400h40.200c7.800 0 10.700-5.400 13.400-13.600 2.800-8.400 2.700-16.500 0-27.200-1.900-7.800-5.600-13.600-13.400-13.600zM70.600 93.300c2.800 0 5 2.300 5 5.100s-2.200 5.100-5 5.100-5-2.300-5-5.100 2.200-5.100 5-5.100z"/></g></svg>
<span class="abs" style="left:211px;top:1px;letter-spacing:.4px">main.py</span>
<svg class="abs" style="left:317.0px;top:13.0px" width="12" height="20" viewBox="0 0 12 20" ><path d="M1.500 1l9 9-9 9" fill="none" stroke="#a9a9a9" stroke-width="2"/></svg>
<svg class="abs" style="left:341.5px;top:9.0px" width="24" height="26" viewBox="0 0 24 26" ><g fill="none" stroke="#aa82d2" stroke-width="2" stroke-linejoin="round"><path d="M12 1.500L22.500 7v12L12 24.500 1.500 19V7z"/><path d="M1.500 7L12 12.500 22.500 7M12 12.500v12"/></g></svg>
<span class="abs" style="left:377px;top:1px;letter-spacing:.9px">predict_stock</span>
</div>
<div class="abs" style="left:134px;top:1070px;width:2042px;height:36px;border-top:4px solid #292929;border-bottom:4px solid #292929;border-left:2px solid #292929"></div>
<div class="abs" style="left:132px;top:150px;width:2px;height:1202px;background:#404040"></div>
<div class="abs" style="left:190px;top:150px;width:2px;height:1202px;background:#707070"></div>
<div class="abs" style="left:248px;top:278px;width:2px;height:288px;background:#404040"></div>
<div class="ln mono" style="top:134px;">64</div>
<div class="ln mono" style="top:170px;">65</div>
<div class="cl mono" style="left:132px;top:170px">        <span class="v">predicted_prices</span> = <span class="b1">[</span><span class="b1">]</span></div>
<div class="ln mono" style="top:206px;">66</div>
<div class="ln mono" style="top:242px;">67</div>
<div class="cl mono" style="left:132px;top:242px">        <span class="c">for</span> <span class="v">_</span> <span class="c">in</span> <span class="t">range</span><span class="b1">(</span><span class="n">7</span><span class="b1">)</span>:  <span class="m"># 7<span class="kr">일치</span> <span class="kr">예측</span></span></div>
<div class="ln mono" style="top:278px;">68</div>
<div class="cl mono" style="left:132px;top:278px">            <span class="v">next_price</span> = <span class="v">model</span>.predict<span class="b1">(</span><span class="v">input_data</span><span class="b1">)</span>  <span class="m"># (1, 1) <span class="kr">형태</span></span></div>
<div class="ln mono" style="top:314px;">69</div>
<div class="cl mono" style="left:132px;top:314px">            <span class="v">next_price</span> = <span class="v">next_price</span>.reshape<span class="b1">(</span><span class="n">1</span>, <span class="n">1</span>, <span class="n">1</span><span class="b1">)</span>  <span class="m"># (1, 1, 1)<span class="kr">으로</span> <span class="kr">변환</span></span></div>
<div class="ln mono" style="top:350px;">70</div>
<div class="ln mono" style="top:386px;">71</div>
<div class="cl mono" style="left:132px;top:386px">            <span class="m"># input_data <span class="kr">업데이트</span> (<span class="kr">차원</span> <span class="kr">오류</span> <span class="kr">방지</span>)</span></div>
<div class="ln mono" style="top:422px;">72</div>
<div class="cl mono" style="left:132px;top:422px">            <span class="v">input_data</span> = <span class="t">np</span>.<span class="f">append</span><span class="b1">(</span><span class="v">input_data</span><span class="b2">[</span>:, <span class="n">1</span>:, :<span class="b2">]</span>, <span class="v">next_price</span>, <span class="v">axis</span>=<span class="n">1</span><span class="b1">)</span>  <span class="m"># (1, 30, 1) <span class="kr">유지</span></span></div>
<div class="ln mono" style="top:458px;">73</div>
<div class="ln mono" style="top:494px;">74</div>
<div class="cl mono" style="left:132px;top:494px">            <span class="m"># <span class="kr">역변환</span> (scaling <span class="kr">복구</span>)</span></div>
<div class="ln mono" style="top:530px;">75</div>
<div class="cl mono" style="left:132px;top:530px">            <span class="v">predicted_prices</span>.<span class="f">append</span><span class="b1">(</span><span class="v">scaler</span>.<span class="f">inverse_transform</span><span class="b2">(</span><span class="v">next_price</span>.reshape<span class="b3">(</span><span class="n">1</span>, -<span class="n">1</span><span class="b3">)</span><span class="b2">)</span><span class="b2">[</span><span class="n">0</span><span class="b2">]</span><span class="b2">[</span><span class="n">0</span><span class="b2">]</span><span class="b1">)</span></div>
<div class="ln mono" style="top:566px;">76</div>
<div class="ln mono" style="top:602px;">77</div>
<div class="cl mono" style="left:132px;top:602px">        <span class="m"># <span class="kr">세부</span> <span class="kr">분석</span> <span class="kr">로직</span></span></div>
<div class="ln mono" style="top:638px;">78</div>
<div class="cl mono" style="left:132px;top:638px">        <span class="v hw">current_price</span> = <span class="t">float</span><span class="b1">(</span><span class="v">data</span><span class="b2">[</span>-<span class="n">1</span><span class="b2">]</span><span class="b2">[</span><span class="n">0</span><span class="b2">]</span><span class="b1">)</span></div>
<div class="ln mono" style="top:674px;">79</div>
<div class="cl mono" style="left:132px;top:674px">        <span class="v">predicted_mean</span> = <span class="t">np</span>.<span class="f">mean</span><span class="b1">(</span><span class="v">predicted_prices</span><span class="b1">)</span></div>
<div class="ln mono" style="top:710px;">80</div>
<div class="cl mono" style="left:132px;top:710px">        <span class="v">predicted_std</span> = <span class="t">np</span>.<span class="f">std</span><span class="b1">(</span><span class="v">predicted_prices</span><span class="b1">)</span></div>
<div class="ln mono" style="top:746px;">81</div>
<div class="cl mono" style="left:132px;top:746px">        <span class="v">predicted_volatility</span> = <span class="v">predicted_std</span> / <span class="v">predicted_mean</span> * <span class="n">100</span>  <span class="m"># <span class="kr">예측</span> <span class="kr">변동성</span> (%)</span></div>
<div class="ln mono" style="top:782px;">82</div>
<div class="ln mono" style="top:818px;">83</div>
<div class="cl mono" style="left:132px;top:818px">        <span class="m"># <span class="kr">가격</span> <span class="kr">변화</span> <span class="kr">계산</span></span></div>
<div class="ln mono" style="top:854px;">84</div>
<div class="cl mono" style="left:132px;top:854px">        <span class="v">diffs</span> = <span class="t">np</span>.<span class="f">diff</span><span class="b1">(</span><span class="v">predicted_prices</span><span class="b1">)</span>  <span class="m"># <span class="kr">연속된</span> <span class="kr">차이</span> <span class="kr">계산</span></span></div>
<div class="ln mono" style="top:890px;">85</div>
<div class="cl mono" style="left:132px;top:890px">        <span class="v">rising_days</span> = <span class="t">np</span>.<span class="f">sum</span><span class="b1">(</span><span class="v">diffs</span> &gt; <span class="n">0</span><span class="b1">)</span>  <span class="m"># <span class="kr">상승</span> <span class="kr">횟수</span></span></div>
<div class="ln mono" style="top:926px;">86</div>
<div class="cl mono" style="left:132px;top:926px">        <span class="v">falling_days</span> = <span class="t">np</span>.<span class="f">sum</span><span class="b1">(</span><span class="v">diffs</span> &lt; <span class="n">0</span><span class="b1">)</span>  <span class="m"># <span class="kr">하락</span> <span class="kr">횟수</span></span></div>
<div class="ln mono" style="top:962px;">87</div>
<div class="cl mono" style="left:132px;top:962px">        <span class="v">steady_days</span> = <span class="t">np</span>.<span class="f">sum</span><span class="b1">(</span><span class="v">diffs</span> == <span class="n">0</span><span class="b1">)</span>  <span class="m"># <span class="kr">보합</span> <span class="kr">횟수</span></span></div>
<div class="ln mono" style="top:998px;">88</div>
<div class="ln mono" style="top:1034px;">89</div>
<div class="cl mono" style="left:132px;top:1034px">        <span class="m"># <span class="kr">시작가</span> <span class="kr">대비</span> <span class="kr">종가</span> <span class="kr">변화율</span></span></div>
<div class="ln mono" style="top:1070px;color:#cccccc">90</div>
<div class="cl mono" style="left:132px;top:1070px">        <span class="v">overall_change</span> = <span class="b1">(</span><span class="v">predicted_prices</span><span class="b2">[</span>-<span class="n">1</span><span class="b2">]</span> - <span class="lk hl">current_price</span><span class="b1">)</span> / <span class="v hl">current_price</span> * <span class="n">100</span></div>
<div class="ln mono" style="top:1106px;">91</div>
<div class="ln mono" style="top:1142px;">92</div>
<div class="cl mono" style="left:132px;top:1142px">        <span class="m"># <span class="kr">최대</span> <span class="kr">상승</span>/<span class="kr">하락폭</span> <span class="kr">계산</span></span></div>
<div class="ln mono" style="top:1178px;">93</div>
<div class="cl mono" style="left:132px;top:1178px">        <span class="v">max_rise</span> = <span class="t">np</span>.<span class="v">max</span><span class="b1">(</span><span class="v">predicted_prices</span><span class="b1">)</span> - <span class="v hl">current_price</span></div>
<div class="ln mono" style="top:1214px;">94</div>
<div class="cl mono" style="left:132px;top:1214px">        <span class="v">max_rise_percent</span> = <span class="v">max_rise</span> / <span class="v hl">current_price</span> * <span class="n">100</span></div>
<div class="ln mono" style="top:1250px;">95</div>
<div class="cl mono" style="left:132px;top:1250px">        <span class="v">max_fall</span> = <span class="v hl">current_price</span> - <span class="t">np</span>.<span class="v">min</span><span class="b1">(</span><span class="v">predicted_prices</span><span class="b1">)</span></div>
<div class="ln mono" style="top:1286px;">96</div>
<div class="cl mono" style="left:132px;top:1286px">        <span class="v">max_fall_percent</span> = <span class="v">max_fall</span> / <span class="v hl">current_price</span> * <span class="n">100</span> <span class="c">if</span> <span class="v">max_fall</span> &gt; <span class="n">0</span> <span class="c">else</span> <span class="n">0</span></div>
<div class="ln mono" style="top:1322px;">97</div>
<div class="abs" style="left:492.8px;top:1070px;width:15.4px;height:36px;border:2px solid #888888;background:rgba(0,100,0,.1)"></div>
<div class="abs" style="left:1027.4px;top:1070px;width:15.4px;height:36px;border:2px solid #888888;background:rgba(0,100,0,.1)"></div>
<div class="abs" style="left:941.2px;top:1070px;width:4px;height:36px;background:#aeafad"></div>
<div class="abs" style="left:0;top:114px;width:2176px;height:36px;background:#1f1f1f;box-shadow:0 4px 4px -1px #000000"></div>
<div class="ln mono" style="top:115px">44</div>
<div class="cl mono" style="left:132px;top:115px"><span class="k">def</span> <span class="f">predict_stock</span><span class="b1">(</span><span class="v">stock_code</span>: <span class="t">str</span><span class="b1">)</span>:</div>
<div class="abs mono" style="left:840px;top:1014px;width:488px;height:55px;background:#202020;border:2px solid #454545;border-radius:6px;font-size:24px;line-height:53px;color:#cccccc;white-space:pre;padding-left:17.500px">(variable) current_price: <span class="t">float</span></div>
<div id="mm" class="abs" style="left:2176px;top:114px;width:240px;height:1238px;overflow:hidden;background:#1f1f1f">
<div class="abs" style="left:8px;top:172px;width:232px;height:4px;background:rgba(255,255,255,.17)"></div>
<div class="abs" style="left:8px;top:232px;width:232px;height:16px;background:rgba(255,255,255,.17)"></div>
<div class="abs" style="left:8px;top:440px;width:232px;height:4px;background:rgba(255,255,255,.17)"></div>
<div class="mmt mono"><span class="c">except</span> <span class="t">Exception</span> <span class="c">as</span> <span class="v">e</span>:
    <span class="t">logging</span>.<span class="f">error</span><span class="b1">(</span><span class="k">f</span><span class="s">":: Error loading model: </span><span class="k">{</span><span class="v">str(e)</span><span class="k">}</span><span class="s">"</span><span class="b1">)</span>
    <span class="v">model</span> = <span class="k">None</span>  <span class="m"># <span class="mk">모델</span> <span class="mk">로드</span> <span class="mk">실패</span> <span class="mk">시</span> None<span class="mk">으로</span> <span class="mk">설정</span></span>

<span class="f">@</span><span class="f">app</span>.<span class="f">get</span><span class="b1">(</span><span class="s">"/"</span><span class="b1">)</span>
<span class="k">def</span> <span class="f">root</span><span class="b1">(</span><span class="b1">)</span>:
    <span class="c">return</span> <span class="b1">{</span><span class="s">"message"</span>: <span class="s">"Welcome to the Stock Prediction API"</span><span class="b1">}</span>

<span class="f">@</span><span class="f">app</span>.<span class="f">get</span><span class="b1">(</span><span class="s">"/predict"</span><span class="b1">)</span>
<span class="k">def</span> <span class="f">predict_stock</span><span class="b1">(</span><span class="v">stock_code</span>: <span class="t">str</span><span class="b1">)</span>:
    <span class="c">if</span> <span class="v">model</span> <span class="k">is</span> <span class="k">None</span>:
        <span class="c">return</span> <span class="b1">{</span><span class="s">"error"</span>: <span class="s">"Model not loaded"</span><span class="b1">}</span>

    <span class="c">try</span>:
        <span class="t">logging</span>.<span class="f">info</span><span class="b1">(</span><span class="k">f</span><span class="s">":: Fetching data for </span><span class="k">{</span><span class="v">stock_code</span><span class="k">}</span><span class="s">..."</span><span class="b1">)</span>
        <span class="v">df</span> = <span class="t">yf</span>.download<span class="b1">(</span><span class="v">stock_code</span>, <span class="v">period</span>=<span class="s">"60d"</span><span class="b1">)</span>

        <span class="c">if</span> <span class="v">df</span>.empty:
            <span class="t">logging</span>.<span class="f">warning</span><span class="b1">(</span><span class="k">f</span><span class="s">":: No data available for </span><span class="k">{</span><span class="v">stock_code</span><span class="k">}</span><span class="s">"</span><span class="b1">)</span>
            <span class="c">return</span> <span class="b1">{</span><span class="s">"error"</span>: <span class="s">"Invalid stock code or no data available"</span><span class="b1">}</span>

        <span class="m"># <span class="mk">종가</span> <span class="mk">데이터</span> <span class="mk">추출</span></span>
        <span class="v">data</span> = <span class="v">df</span><span class="b1">[</span><span class="s">'Close'</span><span class="b1">]</span>.values.reshape<span class="b1">(</span>-<span class="n">1</span>, <span class="n">1</span><span class="b1">)</span>
        <span class="v">scaler</span> = <span class="t">MinMaxScaler</span><span class="b1">(</span><span class="v">feature_range</span>=<span class="b2">(</span><span class="n">0</span>, <span class="n">1</span><span class="b2">)</span><span class="b1">)</span>
        <span class="v">scaled_data</span> = <span class="v">scaler</span>.<span class="f">fit_transform</span><span class="b1">(</span><span class="v">data</span><span class="b1">)</span>

        <span class="m"># LSTM <span class="mk">입력을</span> <span class="mk">위해</span> <span class="mk">최근</span> 30<span class="mk">일</span> <span class="mk">데이터</span> <span class="mk">준비</span></span>
        <span class="v">input_data</span> = <span class="t">np</span>.<span class="f">array</span><span class="b1">(</span><span class="b2">[</span><span class="v">scaled_data</span><span class="b3">[</span>-<span class="n">30</span>:<span class="b3">]</span><span class="b2">)</span>.reshape<span class="b2">(</span><span class="n">30</span>, <span class="n">1</span><span class="b2">)</span><span class="b1">]</span><span class="b1">)</span>
        <span class="v">input_data</span> = <span class="v">input_data</span>.reshape<span class="b1">(</span><span class="n">1</span>, <span class="n">30</span>, <span class="n">1</span><span class="b1">)</span>  <span class="m"># (1, 30, 1) <span class="mk">형태로</span> <span class="mk">변환</span></span>

        <span class="v">predicted_prices</span> = <span class="b1">[</span><span class="b1">]</span>

        <span class="c">for</span> <span class="v">_</span> <span class="c">in</span> <span class="t">range</span><span class="b1">(</span><span class="n">7</span><span class="b1">)</span>:  <span class="m"># 7<span class="mk">일치</span> <span class="mk">예측</span></span>
            <span class="v">next_price</span> = <span class="v">model</span>.predict<span class="b1">(</span><span class="v">input_data</span><span class="b1">)</span>  <span class="m"># (1, 1) <span class="mk">형태</span></span>
            <span class="v">next_price</span> = <span class="v">next_price</span>.reshape<span class="b1">(</span><span class="n">1</span>, <span class="n">1</span>, <span class="n">1</span><span class="b1">)</span>  <span class="m"># (1, 1, 1)<span class="mk">으로</span> <span class="mk">변환</span></span>

            <span class="m"># input_data <span class="mk">업데이트</span> (<span class="mk">차원</span> <span class="mk">오류</span> <span class="mk">방지</span>)</span>
            <span class="v">input_data</span> = <span class="t">np</span>.<span class="f">append</span><span class="b1">(</span><span class="v">input_data</span><span class="b2">[</span>:, <span class="n">1</span>:, :<span class="b2">]</span>, <span class="v">next_price</span>, <span class="v">axis</span>=<span class="n">1</span><span class="b1">)</span>  <span class="m"># (1, 30, 1) <span class="mk">유지</span></span>

            <span class="m"># <span class="mk">역변환</span> (scaling <span class="mk">복구</span>)</span>
            <span class="v">predicted_prices</span>.<span class="f">append</span><span class="b1">(</span><span class="v">scaler</span>.<span class="f">inverse_transform</span><span class="b2">(</span><span class="v">next_price</span>.reshape<span class="b3">(</span><span class="n">1</span>, -<span class="n">1</span><span class="b3">)</span><span class="b2">)</span><span class="b2">[</span><span class="n">0</span><span class="b2">]</span><span class="b2">[</span><span class="n">0</span><span class="b2">]</span><span class="b1">)</span>

        <span class="m"># <span class="mk">세부</span> <span class="mk">분석</span> <span class="mk">로직</span></span>
        <span class="mh">current_price</span> = <span class="t">float</span><span class="b1">(</span><span class="v">data</span><span class="b2">[</span>-<span class="n">1</span><span class="b2">]</span><span class="b2">[</span><span class="n">0</span><span class="b2">]</span><span class="b1">)</span>
        <span class="v">predicted_mean</span> = <span class="t">np</span>.<span class="f">mean</span><span class="b1">(</span><span class="v">predicted_prices</span><span class="b1">)</span>
        <span class="v">predicted_std</span> = <span class="t">np</span>.<span class="f">std</span><span class="b1">(</span><span class="v">predicted_prices</span><span class="b1">)</span>
        <span class="v">predicted_volatility</span> = <span class="v">predicted_std</span> / <span class="v">predicted_mean</span> * <span class="n">100</span>  <span class="m"># <span class="mk">예측</span> <span class="mk">변동성</span> (%)</span>

        <span class="m"># <span class="mk">가격</span> <span class="mk">변화</span> <span class="mk">계산</span></span>
        <span class="v">diffs</span> = <span class="t">np</span>.<span class="f">diff</span><span class="b1">(</span><span class="v">predicted_prices</span><span class="b1">)</span>  <span class="m"># <span class="mk">연속된</span> <span class="mk">차이</span> <span class="mk">계산</span></span>
        <span class="v">rising_days</span> = <span class="t">np</span>.<span class="f">sum</span><span class="b1">(</span><span class="v">diffs</span> &gt; <span class="n">0</span><span class="b1">)</span>  <span class="m"># <span class="mk">상승</span> <span class="mk">횟수</span></span>
        <span class="v">falling_days</span> = <span class="t">np</span>.<span class="f">sum</span><span class="b1">(</span><span class="v">diffs</span> &lt; <span class="n">0</span><span class="b1">)</span>  <span class="m"># <span class="mk">하락</span> <span class="mk">횟수</span></span>
        <span class="v">steady_days</span> = <span class="t">np</span>.<span class="f">sum</span><span class="b1">(</span><span class="v">diffs</span> == <span class="n">0</span><span class="b1">)</span>  <span class="m"># <span class="mk">보합</span> <span class="mk">횟수</span></span>

        <span class="m"># <span class="mk">시작가</span> <span class="mk">대비</span> <span class="mk">종가</span> <span class="mk">변화율</span></span>
        <span class="v">overall_change</span> = <span class="b1">(</span><span class="v">predicted_prices</span><span class="b2">[</span>-<span class="n">1</span><span class="b2">]</span> - <span class="mh">current_price</span><span class="b1">)</span> / <span class="mh">current_price</span> * <span class="n">100</span>

        <span class="m"># <span class="mk">최대</span> <span class="mk">상승</span>/<span class="mk">하락폭</span> <span class="mk">계산</span></span>
        <span class="v">max_rise</span> = <span class="t">np</span>.<span class="v">max</span><span class="b1">(</span><span class="v">predicted_prices</span><span class="b1">)</span> - <span class="mh">current_price</span>
        <span class="v">max_rise_percent</span> = <span class="v">max_rise</span> / <span class="mh">current_price</span> * <span class="n">100</span>
        <span class="v">max_fall</span> = <span class="mh">current_price</span> - <span class="t">np</span>.<span class="v">min</span><span class="b1">(</span><span class="v">predicted_prices</span><span class="b1">)</span>
        <span class="v">max_fall_percent</span> = <span class="v">max_fall</span> / <span class="mh">current_price</span> * <span class="n">100</span> <span class="c">if</span> <span class="v">max_fall</span> &gt; <span class="n">0</span> <span class="c">else</span> <span class="n">0</span>

        <span class="m"># <span class="mk">추세</span> <span class="mk">판단</span></span>
        <span class="c">if</span> <span class="v">overall_change</span> &gt; <span class="n">5</span>:
            <span class="v">trend</span> = <span class="s">"<span class="mk">강한</span> <span class="mk">상승세</span>"</span>
        <span class="c">elif</span> <span class="v">overall_change</span> &gt; <span class="n">2</span>:
            <span class="v">trend</span> = <span class="s">"<span class="mk">상승세</span>"</span>
        <span class="c">elif</span> <span class="v">overall_change</span> &gt; <span class="n">0</span>:
            <span class="v">trend</span> = <span class="s">"<span class="mk">약한</span> <span class="mk">상승세</span>"</span>
        <span class="c">elif</span> <span class="v">overall_change</span> &gt; -<span class="n">2</span>:
            <span class="v">trend</span> = <span class="s">"<span class="mk">약한</span> <span class="mk">하락세</span>"</span>
        <span class="c">elif</span> <span class="v">overall_change</span> &gt; -<span class="n">5</span>:
            <span class="v">trend</span> = <span class="s">"<span class="mk">하락세</span>"</span>
        <span class="c">else</span>:
            <span class="v">trend</span> = <span class="s">"<span class="mk">강한</span> <span class="mk">하락세</span>"</span>

        <span class="m"># <span class="mk">변동성</span> <span class="mk">분석</span></span>
        <span class="v">recent_volatility</span> = <span class="t">np</span>.<span class="f">std</span><span class="b1">(</span><span class="v">data</span><span class="b2">[</span>-<span class="n">30</span>:<span class="b2">]</span><span class="b1">)</span> / <span class="t">np</span>.<span class="f">mean</span><span class="b1">(</span><span class="v">data</span><span class="b2">[</span>-<span class="n">30</span>:<span class="b2">]</span><span class="b1">)</span> * <span class="n">100</span>
        <span class="c">if</span> <span class="v">predicted_volatility</span> &gt; <span class="v">recent_volatility</span> * <span class="n">1.5</span>:
            <span class="v">volatility_status</span> = <span class="s">"<span class="mk">변동성</span> <span class="mk">급증</span>"</span>
        <span class="c">elif</span> <span class="v">predicted_volatility</span> &gt; <span class="v">recent_volatility</span> * <span class="n">1.2</span>:
            <span class="v">volatility_status</span> = <span class="s">"<span class="mk">증가</span>"</span>
        <span class="c">elif</span> <span class="v">predicted_volatility</span> &lt; <span class="v">recent_volatility</span> * <span class="n">0.8</span>:
            <span class="v">volatility_status</span> = <span class="s">"<span class="mk">감소</span>"</span>
        <span class="c">elif</span> <span class="v">predicted_volatility</span> &lt; <span class="v">recent_volatility</span> * <span class="n">0.5</span>:
            <span class="v">volatility_status</span> = <span class="s">"<span class="mk">변동성</span> <span class="mk">급감</span>"</span>
        <span class="c">else</span>:
            <span class="v">volatility_status</span> = <span class="s">"<span class="mk">안정적</span>"</span>

        <span class="m"># <span class="mk">모멘텀</span> <span class="mk">분석</span> <span class="mk">추가</span> <span class="mk">계산</span></span>
        <span class="v">momentum</span> = <span class="t">np</span>.<span class="f">sum</span><span class="b1">(</span><span class="v">diffs</span><span class="b1">)</span> / <span class="f">len</span><span class="b1">(</span><span class="v">diffs</span><span class="b1">)</span>  <span class="m"># <span class="mk">평균적인</span> <span class="mk">일일</span> <span class="mk">변화</span> <span class="mk">정도</span></span>
        <span class="v">momentum_strength</span> = <span class="s">"<span class="mk">강함</span>"</span> <span class="c">if</span> <span class="f">abs</span><span class="b1">(</span><span class="v">momentum</span><span class="b1">)</span> &gt; <span class="v">predicted_std</span> * <span class="n">0.5</span> <span class="c">else</span> <span class="s">"<span class="mk">약함</span>"</span>

        <span class="m"># <span class="mk">투자</span> <span class="mk">제안</span> // <span class="mk">간단한</span> <span class="mk">규칙</span> <span class="mk">기반</span></span>
        <span class="c">if</span> <span class="v">rising_days</span> &gt; <span class="v">falling_days</span> <span class="k">and</span> <span class="v">overall_change</span> &gt; <span class="n">2</span>:
            <span class="v">suggestion</span> = <span class="s">"<span class="mk">매수</span> <span class="mk">고려</span>"</span>
        <span class="c">elif</span> <span class="v">falling_days</span> &gt; <span class="v">rising_days</span> <span class="k">and</span> <span class="v">overall_change</span> &lt; -<span class="n">2</span>:
            <span class="v">suggestion</span> = <span class="s">"<span class="mk">매도</span> <span class="mk">고려</span>"</span>
        <span class="c">elif</span> <span class="v">overall_change</span> &gt; <span class="n">3</span> <span class="k">and</span> <span class="v">rising_days</span> &gt;= <span class="n">4</span>:
            <span class="v">suggestion</span> = <span class="s">"<span class="mk">강한</span> <span class="mk">상승</span> <span class="mk">모멘텀</span>"</span>
        <span class="c">elif</span> <span class="v">overall_change</span> &lt; -<span class="n">3</span> <span class="k">and</span> <span class="v">falling_days</span> &gt;= <span class="n">4</span>:
            <span class="v">suggestion</span> = <span class="s">"<span class="mk">강한</span> <span class="mk">하락</span> <span class="mk">모멘텀</span>"</span>
        <span class="c">else</span>:
            <span class="v">suggestion</span> = <span class="s">"<span class="mk">관망</span> <span class="mk">권장</span>"</span>

        <span class="t">logging</span>.<span class="f">info</span><span class="b1">(</span><span class="k">f</span><span class="s">":: Analysis: </span><span class="k">{</span><span class="v">trend</span><span class="k">}</span><span class="s">, Suggestion: </span><span class="k">{</span><span class="v">suggestion</span><span class="k">}</span><span class="s">"</span><span class="b1">)</span>

        <span class="c">return</span> <span class="b1">{</span>
    <span class="s">"stock_code"</span>: <span class="v">stock_code</span>,
    <span class="mh">"current_price"</span>: <span class="t">float</span><span class="b2">(</span><span class="mh">current_price</span><span class="b2">)</span>,
    <span class="s">"predicted_prices"</span>: <span class="b2">[</span><span class="t">float</span><span class="b3">(</span><span class="v">p</span><span class="b3">)</span> <span class="c">for</span> <span class="v">p</span> <span class="c">in</span> <span class="v">predicted_prices</span><span class="b2">]</span>,
    <span class="s">"historical_prices"</span>: <span class="b2">[</span><span class="t">float</span><span class="b3">(</span><span class="v">p</span><span class="b3">)</span> <span class="c">for</span> <span class="v">p</span> <span class="c">in</span> <span class="v">data</span><span class="b3">[</span>-<span class="n">30</span>:<span class="b3">]</span>.flatten<span class="b3">(</span><span class="b3">)</span><span class="b2">]</span>,
    <span class="s">"analysis_summary"</span>: <span class="v">trend</span>,  <span class="m"># <span class="mk">새</span> <span class="mk">분석</span> <span class="mk">요약</span> <span class="mk">추가</span></span>
    <span class="s">"investment_suggestion"</span>: <span class="v">suggestion</span>,  <span class="m"># <span class="mk">새</span> <span class="mk">투자제안</span> <span class="mk">추가</span></span>
    <span class="s">"detailed_analysis"</span>: <span class="b2">{</span>
        <span class="s">"price_trend"</span>: <span class="v">trend</span>,
        <span class="s">"overall_change_percent"</span>: <span class="f">round</span><span class="b3">(</span><span class="t">float</span><span class="b1">(</span><span class="v">overall_change</span><span class="b1">)</span>, <span class="n">2</span><span class="b3">)</span>,
        <span class="s">"predicted_volatility"</span>: <span class="f">round</span><span class="b3">(</span><span class="t">float</span><span class="b1">(</span><span class="v">predicted_volatility</span><span class="b1">)</span>, <span class="n">2</span><span class="b3">)</span>,
        <span class="s">"volatility_status"</span>: <span class="v">volatility_status</span>,
        <span class="s">"rising_days"</span>: <span class="t">int</span><span class="b3">(</span><span class="v">rising_days</span><span class="b3">)</span>,
        <span class="s">"falling_days"</span>: <span class="t">int</span><span class="b3">(</span><span class="v">falling_days</span><span class="b3">)</span>,
        <span class="s">"steady_days"</span>: <span class="t">int</span><span class="b3">(</span><span class="v">steady_days</span><span class="b3">)</span>,
        <span class="s">"max_rise_percent"</span>: <span class="f">round</span><span class="b3">(</span><span class="t">float</span><span class="b1">(</span><span class="v">max_rise_percent</span><span class="b1">)</span>, <span class="n">2</span><span class="b3">)</span>,
        <span class="s">"max_fall_percent"</span>: <span class="f">round</span><span class="b3">(</span><span class="t">float</span><span class="b1">(</span><span class="v">max_fall_percent</span><span class="b1">)</span>, <span class="n">2</span><span class="b3">)</span>,
        <span class="s">"momentum"</span>: <span class="f">round</span><span class="b3">(</span><span class="t">float</span><span class="b1">(</span><span class="v">momentum</span><span class="b1">)</span>, <span class="n">2</span><span class="b3">)</span>,
        <span class="s">"momentum_strength"</span>: <span class="v">momentum_strength</span>
    <span class="b2">}</span>
<span class="b1">}</span>

    <span class="c">except</span> <span class="t">Exception</span> <span class="c">as</span> <span class="v">e</span>:
        <span class="t">logging</span>.<span class="f">error</span><span class="b1">(</span><span class="k">f</span><span class="s">":: Error in prediction: </span><span class="k">{</span><span class="v">str(e)</span><span class="k">}</span><span class="s">"</span><span class="b1">)</span>
        <span class="c">return</span> <span class="b1">{</span><span class="s">"error"</span>: <span class="t">str</span><span class="b2">(</span><span class="v">e</span><span class="b2">)</span><span class="b1">}</span>

<span class="m"># <span class="mk">새로운</span> <span class="mk">기능</span>: LSTM <span class="mk">모델</span> <span class="mk">성능</span> <span class="mk">평가</span>/<span class="mk">분석</span></span>
<span class="f">@</span><span class="f">app</span>.<span class="f">get</span><span class="b1">(</span><span class="s">"/analyze-model"</span><span class="b1">)</span>
<span class="k">def</span> <span class="f">analyze_model</span><span class="b1">(</span>
    <span class="v">stock_code</span>: <span class="t">str</span>,
    <span class="v">test_period</span>: <span class="t">int</span> = <span class="t">Query</span><span class="b2">(</span><span class="n">120</span>, <span class="v">description</span>=<span class="s">"<span class="mk">테스트</span> <span class="mk">기간</span>(<span class="mk">일</span>)"</span>, <span class="v">ge</span>=<span class="n">30</span>, <span class="v">le</span>=<span class="n">365</span><span class="b2">)</span>,
    <span class="v">prediction_horizon</span>: <span class="t">int</span> = <span class="t">Query</span><span class="b2">(</span><span class="n">7</span>, <span class="v">description</span>=<span class="s">"<span class="mk">예측</span> <span class="mk">기간</span>(<span class="mk">일</span>)"</span>, <span class="v">ge</span>=<span class="n">1</span>, <span class="v">le</span>=<span class="n">30</span><span class="b2">)</span>
<span class="b1">)</span>:
    <span class="s">"""</span>
<span class="s">    LSTM <span class="mk">모델의</span> <span class="mk">과거</span> <span class="mk">예측</span> <span class="mk">성능을</span> <span class="mk">분석하는</span> <span class="mk">엔드포인트</span>.</span>
<span class="s"></span>
<span class="s">    - <span class="mk">예측</span> <span class="mk">정확도</span> <span class="mk">계산</span></span>
<span class="s">    - <span class="mk">방향성</span> <span class="mk">분석</span></span>
<span class="s">    - <span class="mk">오차범위</span> <span class="mk">분석</span></span>
<span class="s">    - <span class="mk">시계열</span> <span class="mk">패턴</span> <span class="mk">분석</span></span>
<span class="s">    """</span>
    <span class="c">if</span> <span class="v">model</span> <span class="k">is</span> <span class="k">None</span>:
        <span class="c">return</span> <span class="b1">{</span><span class="s">"error"</span>: <span class="s">"Model not loaded"</span><span class="b1">}</span>

    <span class="c">try</span>:
        <span class="m"># <span class="mk">데이터</span> <span class="mk">수집</span></span>
        <span class="t">logging</span>.<span class="f">info</span><span class="b1">(</span><span class="k">f</span><span class="s">":: Fetching historical data for </span><span class="k">{</span><span class="v">stock_code</span><span class="k">}</span><span class="s"> (last </span><span class="k">{</span><span class="v">test_period</span><span class="k">}</span><span class="s"> days)..."</span><span class="b1">)</span>
        <span class="v">df</span> = <span class="t">yf</span>.download<span class="b1">(</span><span class="v">stock_code</span>, <span class="v">period</span>=<span class="k">f</span><span class="s">"</span><span class="k">{</span><span class="v">test_period + 30</span><span class="k">}</span><span class="s">d"</span><span class="b1">)</span>  <span class="m"># 30<span class="mk">일</span> <span class="mk">추가</span> (<span class="mk">시퀀스</span> <span class="mk">준비</span>)</span>

        <span class="c">if</span> <span class="v">df</span>.empty <span class="k">or</span> <span class="f">len</span><span class="b1">(</span><span class="v">df</span><span class="b1">)</span> &lt; <span class="v">test_period</span> + <span class="n">30</span>:
            <span class="c">return</span> <span class="b1">{</span><span class="s">"error"</span>: <span class="s">"Insufficient historical data for analysis"</span><span class="b1">}</span>

        <span class="v">close_prices</span> = <span class="v">df</span><span class="b1">[</span><span class="s">'Close'</span><span class="b1">]</span>.values.reshape<span class="b1">(</span>-<span class="n">1</span>, <span class="n">1</span><span class="b1">)</span>
        <span class="v">dates</span> = <span class="v">df</span>.index.tolist<span class="b1">(</span><span class="b1">)</span>

        <span class="m"># <span class="mk">데이터</span> <span class="mk">스케일링</span></span>
        <span class="v">scaler</span> = <span class="t">MinMaxScaler</span><span class="b1">(</span><span class="v">feature_range</span>=<span class="b2">(</span><span class="n">0</span>, <span class="n">1</span><span class="b2">)</span><span class="b1">)</span>
        <span class="v">scaled_data</span> = <span class="v">scaler</span>.<span class="f">fit_transform</span><span class="b1">(</span><span class="v">close_prices</span><span class="b1">)</span>

        <span class="m"># <span class="mk">백테스팅을</span> <span class="mk">위한</span> <span class="mk">실제</span> <span class="mk">데이터와</span> <span class="mk">예측</span> <span class="mk">값</span> <span class="mk">저장하는</span> <span class="mk">리스트</span></span>
        <span class="v">actual_prices</span> = <span class="b1">[</span><span class="b1">]</span>
        <span class="v">predicted_prices</span> = <span class="b1">[</span><span class="b1">]</span>
        <span class="v">prediction_dates</span> = <span class="b1">[</span><span class="b1">]</span>

        <span class="m"># <span class="mk">백테스팅</span> <span class="mk">기간</span> <span class="mk">설정</span></span>
        <span class="v">backtest_range</span> = <span class="f">min</span><span class="b1">(</span><span class="v">test_period</span>, <span class="f">len</span><span class="b2">(</span><span class="v">close_prices</span><span class="b2">)</span> - <span class="n">30</span><span class="b1">)</span>

        <span class="c">for</span> <span class="v">i</span> <span class="c">in</span> <span class="t">range</span><span class="b1">(</span><span class="v">backtest_range</span><span class="b1">)</span>:
            <span class="m"># <span class="mk">실제</span> <span class="mk">가격</span></span>
            <span class="v">actual_price</span> = <span class="v">close_prices</span><span class="b1">[</span><span class="n">30</span>+<span class="v">i</span>:<span class="n">30</span>+<span class="v">i</span>+<span class="v">prediction_horizon</span><span class="b1">]</span>
            <span class="v">actual_prices</span>.<span class="f">append</span><span class="b1">(</span><span class="v">actual_price</span>.flatten<span class="b2">(</span><span class="b2">)</span><span class="b1">)</span>
            <span class="v">prediction_dates</span>.<span class="f">append</span><span class="b1">(</span><span class="v">dates</span><span class="b2">[</span><span class="n">30</span>+<span class="v">i</span>:<span class="n">30</span>+<span class="v">i</span>+<span class="v">prediction_horizon</span><span class="b2">]</span><span class="b1">)</span>

            <span class="m"># <span class="mk">예측</span> <span class="mk">수행</span></span>
            <span class="v">input_sequence</span> = <span class="v">scaled_data</span><span class="b1">[</span><span class="v">i</span>:<span class="v">i</span>+<span class="n">30</span><span class="b1">]</span>.reshape<span class="b1">(</span><span class="n">1</span>, <span class="n">30</span>, <span class="n">1</span><span class="b1">)</span>
            <span class="v">pred_sequence</span> = <span class="v">input_sequence</span>.copy<span class="b1">(</span><span class="b1">)</span>

            <span class="v">horizon_predictions</span> = <span class="b1">[</span><span class="b1">]</span>
            <span class="c">for</span> <span class="v">_</span> <span class="c">in</span> <span class="t">range</span><span class="b1">(</span><span class="v">prediction_horizon</span><span class="b1">)</span>:
                <span class="v">next_pred</span> = <span class="v">model</span>.predict<span class="b1">(</span><span class="v">pred_sequence</span>, <span class="v">verbose</span>=<span class="n">0</span><span class="b1">)</span>
                <span class="v">horizon_predictions</span>.<span class="f">append</span><span class="b1">(</span><span class="v">next_pred</span><span class="b2">[</span><span class="n">0</span>, <span class="n">0</span><span class="b2">]</span><span class="b1">)</span>

                <span class="m"># <span class="mk">다음</span> <span class="mk">예측을</span> <span class="mk">위해</span> <span class="mk">시퀀스</span> <span class="mk">업데이트</span></span>
                <span class="v">pred_sequence</span> = <span class="t">np</span>.<span class="f">append</span><span class="b1">(</span><span class="v">pred_sequence</span><span class="b2">[</span>:, <span class="n">1</span>:, :<span class="b2">]</span>,
                                         <span class="b2">[</span><span class="b3">[</span><span class="v">next_pred</span><span class="b3">]</span><span class="b2">]</span>,
                                         <span class="v">axis</span>=<span class="n">1</span><span class="b1">)</span>

            <span class="m"># <span class="mk">예측</span> <span class="mk">결과</span> <span class="mk">역스케일링</span></span>
            <span class="v">horizon_predictions</span> = <span class="t">np</span>.<span class="f">array</span><span class="b1">(</span><span class="v">horizon_predictions</span><span class="b1">)</span>.reshape<span class="b1">(</span>-<span class="n">1</span>, <span class="n">1</span><span class="b1">)</span>
            <span class="v">horizon_predictions</span> = <span class="v">scaler</span>.<span class="f">inverse_transform</span><span class="b1">(</span><span class="v">horizon_predictions</span><span class="b1">)</span>.flatten<span class="b1">(</span><span class="b1">)</span>
            <span class="v">predicted_prices</span>.<span class="f">append</span><span class="b1">(</span><span class="v">horizon_predictions</span><span class="b1">)</span>

        <span class="m"># <span class="mk">성능</span> <span class="mk">메트릭</span> <span class="mk">계산</span></span>
        <span class="m"># 1<span class="mk">일</span>, 3<span class="mk">일</span>, 7<span class="mk">일</span> <span class="mk">예측에</span> <span class="mk">대한</span> <span class="mk">성능</span> <span class="mk">분석</span></span>
        <span class="v">horizon_metrics</span> = <span class="b1">{</span><span class="b1">}</span>
        <span class="c">for</span> <span class="v">day</span> <span class="c">in</span> <span class="b1">[</span><span class="n">0</span>, <span class="n">2</span>, <span class="f">min</span><span class="b2">(</span><span class="n">6</span>, <span class="v">prediction_horizon</span>-<span class="n">1</span><span class="b2">)</span><span class="b1">]</span>:
            <span class="c">if</span> <span class="v">day</span> &gt;= <span class="v">prediction_horizon</span>:
                <span class="c">continue</span>

            <span class="v">day_actuals</span> = <span class="b1">[</span><span class="v">prices</span><span class="b2">[</span><span class="v">day</span><span class="b2">]</span> <span class="c">for</span> <span class="v">prices</span> <span class="c">in</span> <span class="v">actual_prices</span> <span class="c">if</span> <span class="f">len</span><span class="b2">(</span><span class="v">prices</span><span class="b2">)</span> &gt; <span class="v">day</span><span class="b1">]</span>
            <span class="v">day_preds</span> = <span class="b1">[</span><span class="v">prices</span><span class="b2">[</span><span class="v">day</span><span class="b2">]</span> <span class="c">for</span> <span class="v">prices</span> <span class="c">in</span> <span class="v">predicted_prices</span> <span class="c">if</span> <span class="f">len</span><span class="b2">(</span><span class="v">prices</span><span class="b2">)</span> &gt; <span class="v">day</span><span class="b1">]</span>

            <span class="c">if</span> <span class="k">not</span> <span class="v">day_actuals</span> <span class="k">or</span> <span class="k">not</span> <span class="v">day_preds</span>:
                <span class="c">continue</span>

            <span class="v">horizon</span> = <span class="v">day</span> + <span class="n">1</span>
            <span class="v">mae</span> = <span class="f">mean_absolute_error</span><span class="b1">(</span><span class="v">day_actuals</span>, <span class="v">day_preds</span><span class="b1">)</span>
            <span class="v">mse</span> = <span class="f">mean_squared_error</span><span class="b1">(</span><span class="v">day_actuals</span>, <span class="v">day_preds</span><span class="b1">)</span>
            <span class="v">rmse</span> = <span class="t">np</span>.<span class="f">sqrt</span><span class="b1">(</span><span class="v">mse</span><span class="b1">)</span>

            <span class="m"># <span class="mk">평균</span> <span class="mk">가격</span> <span class="mk">대비</span> <span class="mk">오차율</span> <span class="mk">계산</span></span>
            <span class="v">mean_price</span> = <span class="t">np</span>.<span class="f">mean</span><span class="b1">(</span><span class="v">day_actuals</span><span class="b1">)</span>
            <span class="v">error_percentage</span> = <span class="b1">(</span><span class="v">rmse</span> / <span class="v">mean_price</span><span class="b1">)</span> * <span class="n">100</span>

            <span class="m"># <span class="mk">예측</span> <span class="mk">방향성</span> <span class="mk">정확도</span> <span class="mk">계산</span> (<span class="mk">상승</span>/<span class="mk">하락</span>)</span>
            <span class="c">if</span> <span class="f">len</span><span class="b1">(</span><span class="v">day_actuals</span><span class="b1">)</span> &gt; <span class="n">1</span> <span class="k">and</span> <span class="f">len</span><span class="b1">(</span><span class="v">day_preds</span><span class="b1">)</span> &gt; <span class="n">1</span>:
                <span class="v">actual_diffs</span> = <span class="t">np</span>.<span class="f">diff</span><span class="b1">(</span><span class="b2">[</span><span class="v">actual_prices</span><span class="b3">[</span><span class="v">j</span><span class="b3">]</span><span class="b3">[</span><span class="v">day</span><span class="b3">]</span> <span class="c">for</span> <span class="v">j</span> <span class="c">in</span> <span class="t">range</span><span class="b3">(</span><span class="f">len</span><span class="b1">(</span><span class="v">actual_prices</span><span class="b1">)</span>-<span class="n">1</span><span class="b3">)</span><span class="b2">]</span><span class="b1">)</span>
                <span class="v">pred_diffs</span> = <span class="t">np</span>.<span class="f">diff</span><span class="b1">(</span><span class="b2">[</span><span class="v">predicted_prices</span><span class="b3">[</span><span class="v">j</span><span class="b3">]</span><span class="b3">[</span><span class="v">day</span><span class="b3">]</span> <span class="c">for</span> <span class="v">j</span> <span class="c">in</span> <span class="t">range</span><span class="b3">(</span><span class="f">len</span><span class="b1">(</span><span class="v">predicted_prices</span><span class="b1">)</span>-<span class="n">1</span><span class="b3">)</span><span class="b2">]</span><span class="b1">)</span>

                <span class="v">direction_correct</span> = <span class="f">sum</span><span class="b1">(</span><span class="b2">(</span><span class="v">actual_diffs</span> &gt; <span class="n">0</span><span class="b2">)</span> == <span class="b2">(</span><span class="v">pred_diffs</span> &gt; <span class="n">0</span><span class="b2">)</span><span class="b1">)</span>
                <span class="v">direction_accuracy</span> = <span class="b1">(</span><span class="v">direction_correct</span> / <span class="f">len</span><span class="b2">(</span><span class="v">actual_diffs</span><span class="b2">)</span><span class="b1">)</span> * <span class="n">100</span>
            <span class="c">else</span>:
                <span class="v">direction_accuracy</span> = <span class="k">None</span>

            <span class="v">horizon_metrics</span><span class="b1">[</span><span class="k">f</span><span class="s">"day_</span><span class="k">{</span><span class="v">horizon</span><span class="k">}</span><span class="s">"</span><span class="b1">]</span> = <span class="b1">{</span>
                <span class="s">"mae"</span>: <span class="t">float</span><span class="b2">(</span><span class="v">mae</span><span class="b2">)</span>,
                <span class="s">"rmse"</span>: <span class="t">float</span><span class="b2">(</span><span class="v">rmse</span><span class="b2">)</span>,
                <span class="s">"error_percentage"</span>: <span class="t">float</span><span class="b2">(</span><span class="v">error_percentage</span><span class="b2">)</span>,
                <span class="s">"direction_accuracy"</span>: <span class="t">float</span><span class="b2">(</span><span class="v">direction_accuracy</span><span class="b2">)</span> <span class="c">if</span> <span class="v">direction_accuracy</span> <span class="c">else</span> <span class="k">None</span>
            <span class="b1">}</span>

        <span class="m"># <span class="mk">전체</span> <span class="mk">오차범위</span> <span class="mk">분석</span></span>
        <span class="m"># <span class="mk">오차의</span> <span class="mk">분포</span> <span class="mk">계산</span></span>
        <span class="v">all_errors</span> = <span class="b1">[</span><span class="b1">]</span>
        <span class="c">for</span> <span class="v">i</span> <span class="c">in</span> <span class="t">range</span><span class="b1">(</span><span class="f">min</span><span class="b2">(</span><span class="f">len</span><span class="b3">(</span><span class="v">actual_prices</span><span class="b3">)</span>, <span class="f">len</span><span class="b3">(</span><span class="v">predicted_prices</span><span class="b3">)</span><span class="b2">)</span><span class="b1">)</span>:
            <span class="v">min_len</span> = <span class="f">min</span><span class="b1">(</span><span class="f">len</span><span class="b2">(</span><span class="v">actual_prices</span><span class="b3">[</span><span class="v">i</span><span class="b3">]</span><span class="b2">)</span>, <span class="f">len</span><span class="b2">(</span><span class="v">predicted_prices</span><span class="b3">[</span><span class="v">i</span><span class="b3">]</span><span class="b2">)</span><span class="b1">)</span>
            <span class="c">for</span> <span class="v">j</span> <span class="c">in</span> <span class="t">range</span><span class="b1">(</span><span class="v">min_len</span><span class="b1">)</span>:
                <span class="v">error</span> = <span class="v">predicted_prices</span><span class="b1">[</span><span class="v">i</span><span class="b1">]</span><span class="b1">[</span><span class="v">j</span><span class="b1">]</span> - <span class="v">actual_prices</span><span class="b1">[</span><span class="v">i</span><span class="b1">]</span><span class="b1">[</span><span class="v">j</span><span class="b1">]</span>
                <span class="v">all_errors</span>.<span class="f">append</span><span class="b1">(</span><span class="v">error</span><span class="b1">)</span>

        <span class="v">error_mean</span> = <span class="t">np</span>.<span class="f">mean</span><span class="b1">(</span><span class="v">all_errors</span><span class="b1">)</span>
        <span class="v">error_std</span> = <span class="t">np</span>.<span class="f">std</span><span class="b1">(</span><span class="v">all_errors</span><span class="b1">)</span>
        <span class="v">error_range</span> = <span class="b1">(</span><span class="t">np</span>.<span class="f">percentile</span><span class="b2">(</span><span class="v">all_errors</span>, <span class="n">5</span><span class="b2">)</span>, <span class="t">np</span>.<span class="f">percentile</span><span class="b2">(</span><span class="v">all_errors</span>, <span class="n">95</span><span class="b2">)</span><span class="b1">)</span>

        <span class="m"># <span class="mk">예측</span> <span class="mk">성공률이</span> <span class="mk">높았던</span> <span class="mk">날짜</span></span>
        <span class="m"># <span class="mk">방향성</span> <span class="mk">분석</span></span>
        <span class="v">direction_correct_days</span> = <span class="b1">[</span><span class="b1">]</span>
        <span class="v">direction_wrong_days</span> = <span class="b1">[</span><span class="b1">]</span>

        <span class="c">for</span> <span class="v">i</span> <span class="c">in</span> <span class="t">range</span><span class="b1">(</span><span class="f">min</span><span class="b2">(</span><span class="f">len</span><span class="b3">(</span><span class="v">actual_prices</span><span class="b3">)</span>, <span class="f">len</span><span class="b3">(</span><span class="v">predicted_prices</span><span class="b3">)</span><span class="b2">)</span><span class="b1">)</span>:
            <span class="v">actual</span> = <span class="v">actual_prices</span><span class="b1">[</span><span class="v">i</span><span class="b1">]</span>
            <span class="v">predicted</span> = <span class="v">predicted_prices</span><span class="b1">[</span><span class="v">i</span><span class="b1">]</span>
            <span class="v">min_len</span> = <span class="f">min</span><span class="b1">(</span><span class="f">len</span><span class="b2">(</span><span class="v">actual</span><span class="b2">)</span>, <span class="f">len</span><span class="b2">(</span><span class="v">predicted</span><span class="b2">)</span><span class="b1">)</span>

            <span class="c">for</span> <span class="v">j</span> <span class="c">in</span> <span class="t">range</span><span class="b1">(</span><span class="v">min_len</span> - <span class="n">1</span><span class="b1">)</span>:
                <span class="v">actual_dir</span> = <span class="v">actual</span><span class="b1">[</span><span class="v">j</span>+<span class="n">1</span><span class="b1">]</span> &gt; <span class="v">actual</span><span class="b1">[</span><span class="v">j</span><span class="b1">]</span>
                <span class="v">pred_dir</span> = <span class="v">predicted</span><span class="b1">[</span><span class="v">j</span>+<span class="n">1</span><span class="b1">]</span> &gt; <span class="v">predicted</span><span class="b1">[</span><span class="v">j</span><span class="b1">]</span>

                <span class="c">if</span> <span class="v">actual_dir</span> == <span class="v">pred_dir</span>:
                    <span class="v">direction_correct_days</span>.<span class="f">append</span><span class="b1">(</span><span class="v">dates</span><span class="b2">[</span><span class="n">30</span>+<span class="v">i</span>+<span class="v">j</span><span class="b2">]</span><span class="b1">)</span>
                <span class="c">else</span>:
                    <span class="v">direction_wrong_days</span>.<span class="f">append</span><span class="b1">(</span><span class="v">dates</span><span class="b2">[</span><span class="n">30</span>+<span class="v">i</span>+<span class="v">j</span><span class="b2">]</span><span class="b1">)</span>

        <span class="m"># <span class="mk">변동성</span> <span class="mk">패턴</span> <span class="mk">분석</span></span>
        <span class="m"># <span class="mk">윈도우별</span> <span class="mk">상승</span> <span class="mk">구간</span>, <span class="mk">하락</span> <span class="mk">구간</span>, <span class="mk">횡보</span> <span class="mk">구간</span> <span class="mk">분류</span></span>
        <span class="v">volatility_analysis</span> = <span class="b1">[</span><span class="b1">]</span>
        <span class="v">window_size</span> = <span class="n">5</span>

        <span class="c">for</span> <span class="v">i</span> <span class="c">in</span> <span class="t">range</span><span class="b1">(</span><span class="n">0</span>, <span class="f">len</span><span class="b2">(</span><span class="v">close_prices</span><span class="b2">)</span> - <span class="v">window_size</span>, <span class="v">window_size</span><span class="b1">)</span>:
            <span class="v">window</span> = <span class="v">close_prices</span><span class="b1">[</span><span class="v">i</span>:<span class="v">i</span>+<span class="v">window_size</span><span class="b1">]</span>
            <span class="v">start_price</span> = <span class="v">window</span><span class="b1">[</span><span class="n">0</span><span class="b1">]</span><span class="b1">[</span><span class="n">0</span><span class="b1">]</span>
            <span class="v">end_price</span> = <span class="v">window</span><span class="b1">[</span>-<span class="n">1</span><span class="b1">]</span><span class="b1">[</span><span class="n">0</span><span class="b1">]</span>
            <span class="v">change_pct</span> = <span class="b1">(</span><span class="b2">(</span><span class="v">end_price</span> - <span class="v">start_price</span><span class="b2">)</span> / <span class="v">start_price</span><span class="b1">)</span> * <span class="n">100</span>
            <span class="v">volatility</span> = <span class="t">np</span>.<span class="f">std</span><span class="b1">(</span><span class="v">window</span><span class="b1">)</span> / <span class="t">np</span>.<span class="f">mean</span><span class="b1">(</span><span class="v">window</span><span class="b1">)</span> * <span class="n">100</span>

            <span class="v">window_type</span> = <span class="s">"stable"</span>
            <span class="c">if</span> <span class="f">abs</span><span class="b1">(</span><span class="v">change_pct</span><span class="b1">)</span> &gt; <span class="n">5</span>:
                <span class="v">window_type</span> = <span class="s">"rising"</span> <span class="c">if</span> <span class="v">change_pct</span> &gt; <span class="n">0</span> <span class="c">else</span> <span class="s">"falling"</span>

            <span class="m"># <span class="mk">해당</span> <span class="mk">윈도우의</span> <span class="mk">예측</span> <span class="mk">정확도</span> <span class="mk">계산</span></span>
            <span class="c">if</span> <span class="v">i</span> &gt;= <span class="n">30</span> <span class="k">and</span> <span class="v">i</span> &lt; <span class="f">len</span><span class="b1">(</span><span class="v">close_prices</span><span class="b1">)</span> - <span class="v">prediction_horizon</span>:
                <span class="v">idx</span> = <span class="v">i</span> - <span class="n">30</span>
                <span class="c">if</span> <span class="v">idx</span> &lt; <span class="f">len</span><span class="b1">(</span><span class="v">actual_prices</span><span class="b1">)</span> <span class="k">and</span> <span class="v">idx</span> &lt; <span class="f">len</span><span class="b1">(</span><span class="v">predicted_prices</span><span class="b1">)</span>:
                    <span class="v">actual</span> = <span class="v">actual_prices</span><span class="b1">[</span><span class="v">idx</span><span class="b1">]</span><span class="b1">[</span><span class="n">0</span><span class="b1">]</span>
                    <span class="v">predicted</span> = <span class="v">predicted_prices</span><span class="b1">[</span><span class="v">idx</span><span class="b1">]</span><span class="b1">[</span><span class="n">0</span><span class="b1">]</span>
                    <span class="v">prediction_error</span> = <span class="f">abs</span><span class="b1">(</span><span class="b2">(</span><span class="v">predicted</span> - <span class="v">actual</span><span class="b2">)</span> / <span class="v">actual</span><span class="b1">)</span> * <span class="n">100</span>
                <span class="c">else</span>:
                    <span class="v">prediction_error</span> = <span class="k">None</span>
            <span class="c">else</span>:
                <span class="v">prediction_error</span> = <span class="k">None</span>

            <span class="v">volatility_analysis</span>.<span class="f">append</span><span class="b1">(</span><span class="b2">{</span>
                <span class="s">"start_date"</span>: <span class="v">dates</span><span class="b3">[</span><span class="v">i</span><span class="b3">]</span>.strftime<span class="b3">(</span><span class="s">"%Y-%m-%d"</span><span class="b3">)</span> <span class="c">if</span> <span class="f">hasattr</span><span class="b3">(</span><span class="v">dates</span><span class="b1">[</span><span class="v">i</span><span class="b1">]</span>, <span class="s">"strftime"</span><span class="b3">)</span> <span class="c">else</span> <span class="t">str</span><span class="b3">(</span><span class="v">dates</span><span class="b1">[</span><span class="v">i</span><span class="b1">]</span><span class="b3">)</span>,
                <span class="s">"end_date"</span>: <span class="v">dates</span><span class="b3">[</span><span class="f">min</span><span class="b1">(</span><span class="v">i</span>+<span class="v">window_size</span>-<span class="n">1</span>, <span class="f">len</span><span class="b2">(</span><span class="v">dates</span><span class="b2">)</span>-<span class="n">1</span><span class="b1">)</span><span class="b3">]</span>.strftime<span class="b3">(</span><span class="s">"%Y-%m-%d"</span><span class="b3">)</span>
                            <span class="c">if</span> <span class="f">hasattr</span><span class="b3">(</span><span class="v">dates</span><span class="b1">[</span><span class="f">min</span><span class="b2">(</span><span class="v">i</span>+<span class="v">window_size</span>-<span class="n">1</span>, <span class="f">len</span><span class="b3">(</span><span class="v">dates</span><span class="b3">)</span>-<span class="n">1</span><span class="b2">)</span><span class="b1">]</span>, <span class="s">"strftime"</span><span class="b3">)</span>
                            <span class="c">else</span> <span class="t">str</span><span class="b3">(</span><span class="v">dates</span><span class="b1">[</span><span class="f">min</span><span class="b2">(</span><span class="v">i</span>+<span class="v">window_size</span>-<span class="n">1</span>, <span class="f">len</span><span class="b3">(</span><span class="v">dates</span><span class="b3">)</span>-<span class="n">1</span><span class="b2">)</span><span class="b1">]</span><span class="b3">)</span>,
                <span class="s">"window_type"</span>: <span class="v">window_type</span>,
                <span class="s">"change_percent"</span>: <span class="t">float</span><span class="b3">(</span><span class="v">change_pct</span><span class="b3">)</span>,
                <span class="s">"volatility"</span>: <span class="t">float</span><span class="b3">(</span><span class="v">volatility</span><span class="b3">)</span>,
                <span class="s">"prediction_error"</span>: <span class="t">float</span><span class="b3">(</span><span class="v">prediction_error</span><span class="b3">)</span> <span class="c">if</span> <span class="v">prediction_error</span> <span class="k">is</span> <span class="k">not</span> <span class="k">None</span> <span class="c">else</span> <span class="k">None</span>
            <span class="b2">}</span><span class="b1">)</span></div>
</div>
<div class="abs" style="left:2416px;top:114px;width:1px;height:1238px;background:#141414"></div>
<div class="abs" style="left:2416px;top:232px;width:28px;height:64px;background:rgba(121,121,121,.35)"></div>
<div class="abs" style="left:2426px;top:254px;width:9px;height:12px;background:#98879b"></div>
<div class="abs" style="left:2417px;top:279px;width:27px;height:4px;background:#8a8a8a"></div>
<div class="abs" style="left:2426px;top:276px;width:9px;height:21px;background:#8f8f8f"></div>
<div class="abs" style="left:2426px;top:380px;width:9px;height:12px;background:#8f8f8f"></div>
</div>
<div id="panel">
<div class="abs ko" style="left:39.5px;top:13px;height:40px;line-height:40px;font-size:20.500px;color:#9d9d9d;white-space:nowrap">문제</div>
<div class="abs ko" style="left:125.5px;top:13px;height:40px;line-height:40px;font-size:20.500px;color:#9d9d9d;white-space:nowrap">출력</div>
<div class="abs ko" style="left:212px;top:13px;height:40px;line-height:40px;font-size:20.500px;color:#9d9d9d;white-space:nowrap">디버그 콘솔</div>
<div class="abs ko" style="left:361px;top:13px;height:40px;line-height:40px;font-size:20.500px;color:#e7e7e7;white-space:nowrap">터미널</div>
<div class="abs ko" style="left:466.5px;top:13px;height:40px;line-height:40px;font-size:20.500px;color:#9d9d9d;white-space:nowrap">포트</div>
<div class="abs ko" style="left:552px;top:13px;height:40px;line-height:40px;font-size:20.500px;color:#9d9d9d;white-space:nowrap">주석</div>
<div class="abs" style="left:357px;top:55px;width:66px;height:2px;background:#3376cd"></div>
<svg class="abs" style="left:13px;top:85px" width="18" height="18" viewBox="0 0 18 18"><circle cx="9" cy="9" r="6.800" fill="none" stroke="#6c6c6c" stroke-width="2.600"/></svg>
<div class="abs mono" style="left:40px;top:76px;height:36px;line-height:36px;font-size:24px;color:#cccccc;white-space:pre;letter-spacing:-.45px">hwang@hwang-gwanghoui-MacBookPro stock % </div>
<svg class="abs" style="left:2017.5px;top:20.0px" width="28" height="28" viewBox="0 0 28 28" ><path d="M14 1v26M1 14h26" stroke="#cccccc" stroke-width="2" fill="none"/></svg>
<svg class="abs" style="left:2055.0px;top:30.0px" width="16" height="10" viewBox="0 0 16 10" ><path d="M.8 1l7.200 7.200L15.200 1" fill="none" stroke="#cccccc" stroke-width="1.800"/></svg>
<svg class="abs" style="left:2092.5px;top:21.0px" width="29" height="28" viewBox="0 0 29 28" ><rect x="1.500" y="1.500" width="27" height="27" rx="3" fill="none" stroke="#cccccc" stroke-width="2.200"/><path d="M7.500 9.500l6.500 6-6.500 6M15 22h8" fill="none" stroke="#cccccc" stroke-width="2.200"/></svg>
<div class="abs" style="left:2131px;top:15px;height:40px;line-height:40px;font-size:24px;color:#cccccc;letter-spacing:.3px">zsh</div>
<svg class="abs" style="left:2187.0px;top:20.0px" width="28" height="28" viewBox="0 0 28 28" ><rect x="1.500" y="1.500" width="25" height="25" rx="2.500" fill="none" stroke="#cccccc" stroke-width="2.200"/><path d="M14 1.500v25" stroke="#cccccc" stroke-width="2.200"/></svg>
<svg class="abs" style="left:2234.0px;top:19.5px" width="26" height="29" viewBox="0 0 26 29" ><g fill="none" stroke="#cccccc" stroke-width="2.200"><path d="M1 6h24M8.500 6V2.500h9V6M4 6l1.300 19.500c.1 1.200.8 2 2 2h11.400c1.200 0 1.900-.8 2-2L22 6"/><path d="M10 11v11M13 11v11M16 11v11" stroke-width="1.800"/></g></svg>
<svg class="abs" style="left:2282.5px;top:32.0px" width="27" height="6" viewBox="0 0 27 6" ><g fill="#cccccc"><circle cx="3" cy="3" r="1.900"/><circle cx="13.500" cy="3" r="1.900"/><circle cx="24" cy="3" r="1.900"/></g></svg>
<svg class="abs" style="left:2335.0px;top:26.5px" width="22" height="12" viewBox="0 0 22 12" ><path d="M1.300 11.300L11 1.600l9.700 9.700" fill="none" stroke="#cccccc" stroke-width="2"/></svg>
<svg class="abs" style="left:2388.5px;top:24.5px" width="19" height="19" viewBox="0 0 19 19" ><path d="M1.300 1.300l16.400 16.400M17.700 1.300L1.300 17.700" fill="none" stroke="#cccccc" stroke-width="2"/></svg>
<div class="abs" style="left:2416px;top:80px;width:28px;height:252px;border-left:1px solid #0e0e0e;border-top:1px solid #0e0e0e"></div>
<div class="abs" style="left:2417px;top:80px;width:9px;height:12px;background:#5f5f5f"></div>
</div>
<div id="status">
<div class="abs" style="left:0;top:0;width:68px;height:42px;background:#3376cd"></div>
<svg class="abs" style="left:0;top:0" width="68" height="42" viewBox="0 0 68 42"><path d="M25.600 15.900l7.400 7.500-7.400 7.400M42.100 8.500l-7.400 7.400 7.400 7.500" fill="none" stroke="#ffffff" stroke-width="2"/></svg>
<svg class="abs" style="left:81.5px;top:6.0px" width="22" height="28" viewBox="0 0 22 28" ><g fill="none" stroke="#cccccc" stroke-width="2"><circle cx="5" cy="4.500" r="3.200"/><circle cx="5" cy="23.500" r="3.200"/><circle cx="17" cy="9" r="3.200"/><path d="M5 7.700v12.600M17 12.200c0 4.500-4 5.300-8 5.600-2.500.2-4 1-4 2.500"/></g></svg>
<span class="st " style="left:115px;letter-spacing:0.5px">main</span>
<svg class="abs" style="left:180.5px;top:8.5px" width="28" height="24" viewBox="0 0 28 24" ><g fill="none" stroke="#cccccc" stroke-width="2"><path d="M4.500 9.500A9.800 9.800 0 0124 13.500"/><path d="M20 9.500l4.200 4.500 3.100-5.800"/><path d="M23.500 14.500A9.800 9.800 0 014 10.500"/><path d="M8 14.500L3.800 10 .7 15.800"/></g></svg>
<svg class="abs" style="left:237.5px;top:7.0px" width="26" height="26" viewBox="0 0 26 26" ><g fill="none" stroke="#cccccc" stroke-width="2"><circle cx="13" cy="13" r="11.500"/><path d="M8 8l10 10M18 8L8 18"/></g></svg>
<span class="st " style="left:272px;letter-spacing:0px">0</span>
<svg class="abs" style="left:294.0px;top:7.5px" width="27" height="25" viewBox="0 0 27 25" ><g fill="none" stroke="#cccccc" stroke-width="2" stroke-linejoin="round"><path d="M13.500 2L25.500 23H1.500z"/><path d="M13.500 9.500v7M13.500 18.500v2.500"/></g></svg>
<span class="st " style="left:329px;letter-spacing:0px">0</span>
<svg class="abs" style="left:1430.0px;top:4.0px" width="18" height="32" viewBox="0 0 18 32" ><g fill="none" stroke="#cccccc" stroke-width="2"><circle cx="9" cy="16" r="6.500"/><path d="M9 1v8.500M9 22.500V31"/></g></svg>
<span class="st" style="left:1459px;letter-spacing:1.100px">Hwang9170 (1<span class="ko" style="font-size:21.500px;letter-spacing:0">주 전</span>)</span>
<span class="st" style="left:1718px;letter-spacing:1.150px"><span class="ko" style="font-size:21.500px;letter-spacing:0">줄</span> 90, <span class="ko" style="font-size:21.500px;letter-spacing:0">열</span> 57</span>
<span class="st" style="left:1880px;letter-spacing:.5px"><span class="ko" style="font-size:21.500px;letter-spacing:0">공백</span>: 4</span>
<span class="st " style="left:1982px;letter-spacing:0.6px">UTF-8</span>
<span class="st " style="left:2087.5px;letter-spacing:0.5px">LF</span>
<span class="st" style="left:2146px;letter-spacing:0;font-size:23px;top:-1px">{&thinsp;}</span>
<span class="st " style="left:2183px;letter-spacing:0.6px">Python</span>
<span class="st " style="left:2291px;letter-spacing:1.4px">3.9.6 64-bit</span>
<svg class="abs" style="left:2461.0px;top:6.0px" width="24" height="28" viewBox="0 0 24 28" ><g fill="none" stroke="#cccccc" stroke-width="2"><circle cx="12" cy="10.500" r="3"/><path d="M5.800 17a9 9 0 1112.400 0M12 13.500V27"/></g><path d="M9.500 17h5l-1 10h-3z" fill="#cccccc"/></svg>
<span class="st " style="left:2495px;letter-spacing:0.6px">Go Live</span>
<svg class="abs" style="left:2611px;top:7.5px" width="29" height="26" viewBox="0 0 32.800 29.400"><path fill="#cccccc" d="M3.400 10C3.400 12.500 0 14.500 0 19.200c0 3.300 2.500 5.100 5.200 6.700 3.300 2 7.300 3.400 11.200 3.400s7.900-1.400 11.200-3.400c2.700-1.600 5.200-3.400 5.200-6.700 0-4.700-3.400-6.700-3.400-9.200z"/>
<rect x="3.300" y=".2" width="13.300" height="14.600" rx="5.600" ry="5.800" fill="#cccccc"/><rect x="16.200" y=".2" width="13.300" height="14.600" rx="5.600" ry="5.800" fill="#cccccc"/>
<rect x="6.400" y="3.800" width="7.400" height="7.500" rx="3" ry="3.100" fill="#181818"/><rect x="19" y="3.800" width="7.400" height="7.500" rx="3" ry="3.100" fill="#181818"/>
<path fill="#181818" d="M6.400 15h20v7.300c-2.900 1.900-6.400 2.700-10 2.700s-7.100-.8-10-2.700z"/><path fill="#181818" d="M12.800 15.200l3.600-2.700 3.600 2.700z"/><path fill="#181818" d="M15.200 0l1.200 1.700L17.600 0z"/>
<rect x="11.100" y="16.800" width="3.100" height="6.200" rx="1.550" fill="#cccccc"/><rect x="18.600" y="16.800" width="3.100" height="6.200" rx="1.550" fill="#cccccc"/></svg>
<svg class="abs" style="left:2671.5px;top:6.5px" width="27" height="27" viewBox="0 0 27 27" ><g fill="none" stroke="#cccccc" stroke-width="2"><circle cx="13.500" cy="13.500" r="12"/><path d="M5.500 21.500l16-16"/></g></svg>
<span class="st " style="left:2706px;letter-spacing:0.6px">Prettier</span>
<svg class="abs" style="left:2824.5px;top:6.0px" width="24" height="28" viewBox="0 0 24 28" ><g fill="none" stroke="#cccccc" stroke-width="2" stroke-linejoin="round"><path d="M3 21.500c2-2 2.500-4 2.500-7V11a6.500 6.500 0 0113 0v3.500c0 3 .5 5 2.500 7z"/><path d="M9.500 24.500a2.500 2.500 0 005 0"/></g></svg>
</div>
</div>
</body></html>
